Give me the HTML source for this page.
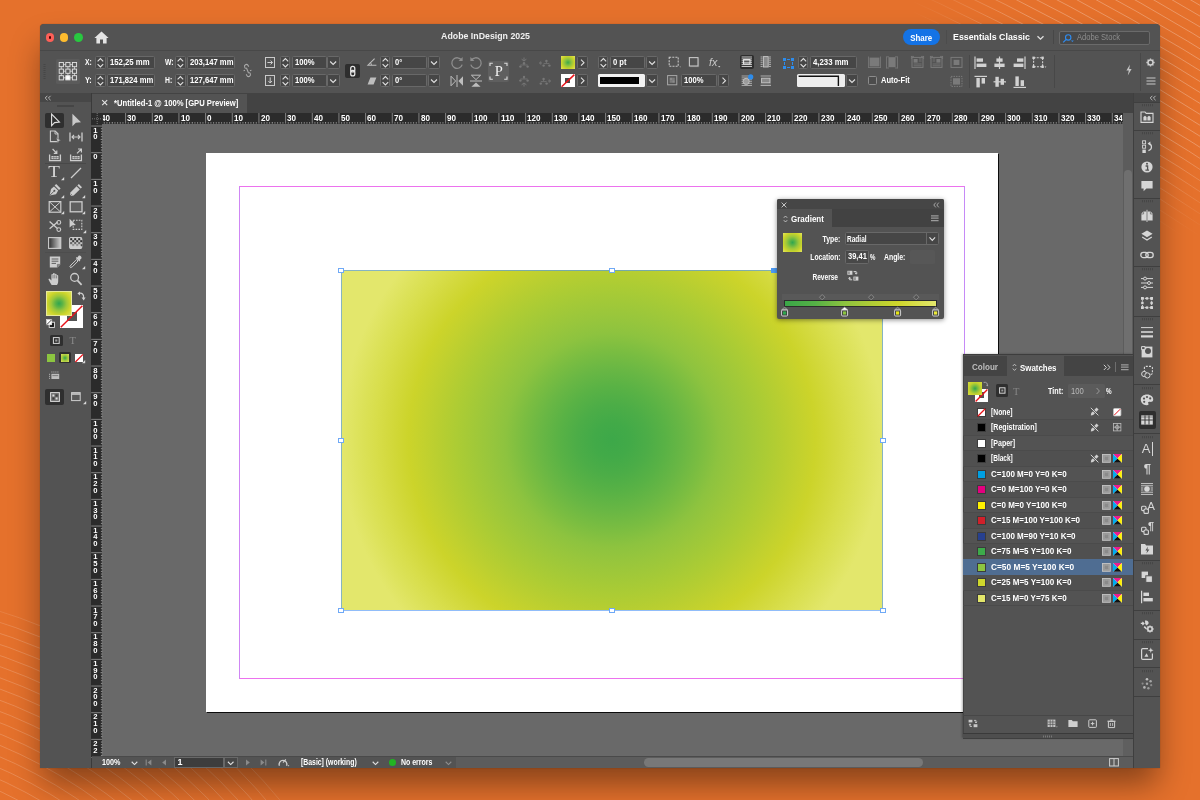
<!DOCTYPE html>
<html><head><meta charset="utf-8"><title>Adobe InDesign 2025</title>
<style>
html,body{margin:0;padding:0}
body{width:1200px;height:800px;overflow:hidden;position:relative;background:#e5712c;font-family:"Liberation Sans",sans-serif}
.a{position:absolute;display:block}
#root{position:absolute;left:0;top:0;width:1200px;height:800px;will-change:transform;-webkit-font-smoothing:antialiased}
svg{overflow:visible}
.t{font-family:"Liberation Sans",sans-serif;font-weight:bold;white-space:nowrap}
.r{font-family:"Liberation Serif",serif}
</style></head><body>
<div id="root">
<svg class="a" style="left:0px;top:0px;" width="1200" height="800" viewBox="0 0 1200 800"><defs><radialGradient id="fade" gradientUnits="userSpaceOnUse" cx="1200" cy="0" r="290" gradientTransform="scale(1 .82)"><stop offset="0" stop-color="#fff"/><stop offset=".6" stop-color="#fff"/><stop offset="1" stop-color="#000"/></radialGradient><radialGradient id="fade2" gradientUnits="userSpaceOnUse" cx="0" cy="800" r="320" gradientTransform="translate(0 800) scale(1 .66) translate(0 -800)"><stop offset="0" stop-color="#fff"/><stop offset=".8" stop-color="#fff"/><stop offset="1" stop-color="#000"/></radialGradient><mask id="mtr" maskUnits="userSpaceOnUse" x="900" y="0" width="300" height="300"><rect x="900" y="0" width="300" height="300" fill="url(#fade)"/></mask><mask id="mbl" maskUnits="userSpaceOnUse" x="0" y="560" width="340" height="240"><rect x="0" y="560" width="340" height="240" fill="url(#fade2)"/></mask></defs><g mask="url(#mtr)"><g fill="none" stroke="#fff" stroke-opacity=".36" stroke-width="0.75"><circle cx="-66" cy="2133" r="2262"/><circle cx="-66" cy="2133" r="2271.3"/><circle cx="-66" cy="2133" r="2280.6"/><circle cx="-66" cy="2133" r="2289.9"/><circle cx="-66" cy="2133" r="2299.2"/><circle cx="-66" cy="2133" r="2308.5"/><circle cx="-66" cy="2133" r="2317.8"/><circle cx="-66" cy="2133" r="2327.1"/><circle cx="-66" cy="2133" r="2336.4"/><circle cx="-66" cy="2133" r="2345.7"/><circle cx="-66" cy="2133" r="2355"/><circle cx="-66" cy="2133" r="2364.3"/><circle cx="-66" cy="2133" r="2373.6"/><circle cx="-66" cy="2133" r="2382.9"/><circle cx="-66" cy="2133" r="2392.2"/><circle cx="-66" cy="2133" r="2401.5"/><circle cx="-66" cy="2133" r="2410.8"/><circle cx="-66" cy="2133" r="2420.1"/><circle cx="-66" cy="2133" r="2429.4"/><circle cx="-66" cy="2133" r="2438.7"/><circle cx="-66" cy="2133" r="2448"/><circle cx="-66" cy="2133" r="2457.3"/><circle cx="-66" cy="2133" r="2466.6"/><circle cx="-66" cy="2133" r="2475.9"/><circle cx="-66" cy="2133" r="2485.2"/></g></g><g mask="url(#mbl)"><g fill="none" stroke="#fff" stroke-opacity=".24" stroke-width="0.75"><circle cx="-184" cy="1186" r="603.5"/><circle cx="-184" cy="1186" r="593"/><circle cx="-184" cy="1186" r="582.5"/><circle cx="-184" cy="1186" r="572"/><circle cx="-184" cy="1186" r="561.5"/><circle cx="-184" cy="1186" r="551"/><circle cx="-184" cy="1186" r="540.5"/><circle cx="-184" cy="1186" r="530"/><circle cx="-184" cy="1186" r="519.5"/><circle cx="-184" cy="1186" r="509"/><circle cx="-184" cy="1186" r="498.5"/><circle cx="-184" cy="1186" r="488"/><circle cx="-184" cy="1186" r="477.5"/><circle cx="-184" cy="1186" r="467"/><circle cx="-184" cy="1186" r="456.5"/><circle cx="-184" cy="1186" r="446"/><circle cx="-184" cy="1186" r="435.5"/><circle cx="-184" cy="1186" r="425"/><circle cx="-184" cy="1186" r="414.5"/><circle cx="-184" cy="1186" r="404"/><circle cx="-184" cy="1186" r="393.5"/><circle cx="-184" cy="1186" r="383"/><circle cx="-184" cy="1186" r="372.5"/><circle cx="-184" cy="1186" r="362"/></g></g></svg>
<div class="a" style="left:39.6px;top:24.3px;width:1120.8px;height:744.2px;background:#535353;border-radius:4px 4px 0 0;box-shadow:0 19px 32px -3px rgba(0,0,0,.42),0 0 1px rgba(0,0,0,.5);"></div>
<div class="a" style="left:39.6px;top:49.5px;width:1120.8px;height:1px;background:#484848;"></div>
<div class="a" style="left:45.7px;top:33px;width:8.6px;height:8.6px;background:#fe5f57;border-radius:5px;"></div>
<div class="a" style="left:59.9px;top:33px;width:8.6px;height:8.6px;background:#febc2e;border-radius:5px;"></div>
<div class="a" style="left:74.1px;top:33px;width:8.6px;height:8.6px;background:#28c840;border-radius:5px;"></div>
<div class="a" style="left:48.6px;top:35.9px;width:2.8px;height:2.8px;background:#4d0000;border-radius:1.4px;"></div>
<svg class="a" style="left:94px;top:31px;" width="15" height="13" viewBox="0 0 15 13"><path d="M7.5 0.6 L0.4 7 L2.4 7 L2.4 12.4 L6 12.4 L6 8.4 L9 8.4 L9 12.4 L12.6 12.4 L12.6 7 L14.6 7 Z" fill="#e4e4e4"/></svg>
<span class="a t" style="left:437.45px;top:30.20px;font-size:9.6px;line-height:12px;color:#f0f0f0;transform:scaleX(0.917);transform-origin:50% 50%;">Adobe InDesign 2025</span>
<div class="a" style="left:903px;top:28.8px;width:37px;height:16.6px;background:#1473e6;border-radius:8.3px;"></div>
<span class="a t" style="left:908.30px;top:31.80px;font-size:9.5px;line-height:11px;color:#fff;transform:scaleX(0.833);transform-origin:50% 50%;">Share</span>
<div class="a" style="left:945.5px;top:30px;width:1px;height:14px;background:#4c4c4c;"></div>
<span class="a t" style="left:953.00px;top:31.00px;font-size:9.6px;line-height:12px;color:#fff;transform:scaleX(0.919);transform-origin:0 50%;">Essentials Classic</span>
<svg class="a" style="left:1036px;top:35px;" width="9" height="6" viewBox="0 0 9 6"><path d="M1.5 1.2 L4.5 4.2 L7.5 1.2" fill="none" stroke="#e0e0e0" stroke-width="1.3"/></svg>
<div class="a" style="left:1052.5px;top:30px;width:1px;height:14px;background:#474747;"></div>
<div class="a" style="left:1058.5px;top:30.5px;width:91px;height:14.5px;background:#484848;border:1px solid #6a6a6a;box-sizing:border-box;border-radius:2px;"></div>
<svg class="a" style="left:1062px;top:32.5px;" width="13" height="11" viewBox="0 0 13 11"><circle cx="6.2" cy="4.4" r="2.7" fill="none" stroke="#2f8cf0" stroke-width="1.1"/><path d="M4.2 6.4 L1.2 9.4" stroke="#2f8cf0" stroke-width="1.2"/><path d="M9 7.4 L11.8 7.4 L10.4 9 Z" fill="#2f8cf0"/></svg>
<span class="a t" style="left:1076.50px;top:32.10px;font-size:8.8px;line-height:11px;color:#8e8e8e;font-weight:normal;transform:scaleX(0.862);transform-origin:0 50%;">Adobe Stock</span>
<div class="a" style="left:39.6px;top:92.5px;width:1120.8px;height:1px;background:#3a3a3a;"></div>
<div class="a" style="left:91px;top:93px;width:1042px;height:20px;background:#434343;"></div>
<div class="a" style="left:91.4px;top:93.5px;width:156px;height:19px;background:#535353;"></div>
<svg class="a" style="left:100.5px;top:98.5px;" width="8" height="8" viewBox="0 0 8 8"><path d="M1.2 1.2 L6.2 6.2 M6.2 1.2 L1.2 6.2" stroke="#e6e6e6" stroke-width="1.1" fill="none"/></svg>
<span class="a t" style="left:113.70px;top:97.50px;font-size:9.2px;line-height:11px;color:#fff;transform:scaleX(0.832);transform-origin:0 50%;">*Untitled-1 @ 100% [GPU Preview]</span>
<div class="a" style="left:39.6px;top:93px;width:51px;height:9px;background:#474747;"></div>
<div class="a" style="left:90.6px;top:93px;width:1px;height:675.4px;background:#3a3a3a;"></div>
<svg class="a" style="left:44px;top:94.5px;" width="8" height="6" viewBox="0 0 8 6"><path d="M3.4 0.8 L1.2 3 L3.4 5.2 M6.6 0.8 L4.4 3 L6.6 5.2" stroke="#b8b8b8" stroke-width="1" fill="none"/></svg>
<div class="a" style="left:57px;top:104.5px;width:17px;height:1px;background:#454545;"></div>
<div class="a" style="left:57px;top:106px;width:17px;height:1px;background:#454545;"></div>
<div class="a" style="left:1133px;top:93px;width:27.4px;height:9px;background:#474747;"></div>
<div class="a" style="left:1133px;top:93px;width:1px;height:675.4px;background:#3f3f3f;"></div>
<svg class="a" style="left:1149px;top:94.5px;" width="8" height="6" viewBox="0 0 8 6"><path d="M3.4 0.8 L1.2 3 L3.4 5.2 M6.6 0.8 L4.4 3 L6.6 5.2" stroke="#b8b8b8" stroke-width="1" fill="none"/></svg>
<div class="a" style="left:91px;top:112.5px;width:1042px;height:645px;background:#696969;"></div>
<div class="a" style="left:207px;top:154px;width:792px;height:559.3px;background:#0c0c0c;"></div>
<div class="a" style="left:206px;top:153px;width:792px;height:559.3px;background:#fff;"></div>
<div class="a" style="left:239px;top:186px;width:725.5px;height:492.5px;border:1px solid #ec72ee;box-sizing:border-box;border-left-color:#cf86f4;border-right-color:#c68af7;"></div>
<div class="a" style="left:341.2px;top:270.4px;width:541.6px;height:339.9px;background:radial-gradient(circle 271px at 50% 50%,#3da849 0.0%,#42aa48 6.6%,#4cad47 13.1%,#59b245 19.7%,#69b744 26.3%,#7abd41 32.8%,#8dc33f 39.4%,#98c63c 45.3%,#a2c938 51.3%,#accc34 57.2%,#b7ce31 63.1%,#c2d12e 69.1%,#ccd42a 75.0%,#d0d735 79.2%,#d4da40 83.3%,#d8de4b 87.5%,#dbe156 91.7%,#dfe461 95.8%,#e3e76c 100%);"></div>
<div class="a" style="left:340.7px;top:269.9px;width:542.6px;height:340.9px;border:1px solid rgba(77,148,245,.62);box-sizing:border-box;"></div>
<div class="a" style="left:338.4px;top:267.6px;width:5.6px;height:5.6px;background:#fff;border:1px solid #6fa9f6;box-sizing:border-box;"></div>
<div class="a" style="left:338.4px;top:437.55px;width:5.6px;height:5.6px;background:#fff;border:1px solid #6fa9f6;box-sizing:border-box;"></div>
<div class="a" style="left:338.4px;top:607.5px;width:5.6px;height:5.6px;background:#fff;border:1px solid #6fa9f6;box-sizing:border-box;"></div>
<div class="a" style="left:609.2px;top:267.6px;width:5.6px;height:5.6px;background:#fff;border:1px solid #6fa9f6;box-sizing:border-box;"></div>
<div class="a" style="left:609.2px;top:607.5px;width:5.6px;height:5.6px;background:#fff;border:1px solid #6fa9f6;box-sizing:border-box;"></div>
<div class="a" style="left:880px;top:267.6px;width:5.6px;height:5.6px;background:#fff;border:1px solid #6fa9f6;box-sizing:border-box;"></div>
<div class="a" style="left:880px;top:437.55px;width:5.6px;height:5.6px;background:#fff;border:1px solid #6fa9f6;box-sizing:border-box;"></div>
<div class="a" style="left:880px;top:607.5px;width:5.6px;height:5.6px;background:#fff;border:1px solid #6fa9f6;box-sizing:border-box;"></div>
<div class="a" style="left:771.4px;top:267.6px;width:5.6px;height:5.4px;background:#4d9cf5;"></div>
<div class="a" style="left:90.8px;top:112.8px;width:1042.2px;height:10.9px;background:#2b2b2b;"></div>
<div class="a" style="left:90.8px;top:123.7px;width:11.6px;height:633.3px;background:#2b2b2b;"></div>
<svg class="a" style="left:0px;top:0px;" width="1200" height="800" viewBox="0 0 1200 800"><rect x="103.77" y="122.2" width="1" height="1.4" fill="#989898"/><rect x="106.43" y="122.2" width="1" height="1.4" fill="#989898"/><rect x="109.10" y="122.2" width="1" height="1.4" fill="#989898"/><rect x="111.77" y="122" width="1" height="1.6" fill="#a0a0a0"/><rect x="114.43" y="122.2" width="1" height="1.4" fill="#989898"/><rect x="117.10" y="122.2" width="1" height="1.4" fill="#989898"/><rect x="119.77" y="122.2" width="1" height="1.4" fill="#989898"/><rect x="122.43" y="122.2" width="1" height="1.4" fill="#989898"/><rect x="125.10" y="113" width="1" height="10.6" fill="#828282"/><rect x="127.77" y="122.2" width="1" height="1.4" fill="#989898"/><rect x="130.43" y="122.2" width="1" height="1.4" fill="#989898"/><rect x="133.10" y="122.2" width="1" height="1.4" fill="#989898"/><rect x="135.77" y="122.2" width="1" height="1.4" fill="#989898"/><rect x="138.43" y="122" width="1" height="1.6" fill="#a0a0a0"/><rect x="141.10" y="122.2" width="1" height="1.4" fill="#989898"/><rect x="143.77" y="122.2" width="1" height="1.4" fill="#989898"/><rect x="146.43" y="122.2" width="1" height="1.4" fill="#989898"/><rect x="149.10" y="122.2" width="1" height="1.4" fill="#989898"/><rect x="151.77" y="113" width="1" height="10.6" fill="#828282"/><rect x="154.43" y="122.2" width="1" height="1.4" fill="#989898"/><rect x="157.10" y="122.2" width="1" height="1.4" fill="#989898"/><rect x="159.77" y="122.2" width="1" height="1.4" fill="#989898"/><rect x="162.43" y="122.2" width="1" height="1.4" fill="#989898"/><rect x="165.10" y="122" width="1" height="1.6" fill="#a0a0a0"/><rect x="167.77" y="122.2" width="1" height="1.4" fill="#989898"/><rect x="170.43" y="122.2" width="1" height="1.4" fill="#989898"/><rect x="173.10" y="122.2" width="1" height="1.4" fill="#989898"/><rect x="175.77" y="122.2" width="1" height="1.4" fill="#989898"/><rect x="178.43" y="113" width="1" height="10.6" fill="#828282"/><rect x="181.10" y="122.2" width="1" height="1.4" fill="#989898"/><rect x="183.77" y="122.2" width="1" height="1.4" fill="#989898"/><rect x="186.43" y="122.2" width="1" height="1.4" fill="#989898"/><rect x="189.10" y="122.2" width="1" height="1.4" fill="#989898"/><rect x="191.77" y="122" width="1" height="1.6" fill="#a0a0a0"/><rect x="194.43" y="122.2" width="1" height="1.4" fill="#989898"/><rect x="197.10" y="122.2" width="1" height="1.4" fill="#989898"/><rect x="199.77" y="122.2" width="1" height="1.4" fill="#989898"/><rect x="202.43" y="122.2" width="1" height="1.4" fill="#989898"/><rect x="205.10" y="113" width="1" height="10.6" fill="#828282"/><rect x="207.77" y="122.2" width="1" height="1.4" fill="#989898"/><rect x="210.43" y="122.2" width="1" height="1.4" fill="#989898"/><rect x="213.10" y="122.2" width="1" height="1.4" fill="#989898"/><rect x="215.77" y="122.2" width="1" height="1.4" fill="#989898"/><rect x="218.43" y="122" width="1" height="1.6" fill="#a0a0a0"/><rect x="221.10" y="122.2" width="1" height="1.4" fill="#989898"/><rect x="223.77" y="122.2" width="1" height="1.4" fill="#989898"/><rect x="226.43" y="122.2" width="1" height="1.4" fill="#989898"/><rect x="229.10" y="122.2" width="1" height="1.4" fill="#989898"/><rect x="231.77" y="113" width="1" height="10.6" fill="#828282"/><rect x="234.43" y="122.2" width="1" height="1.4" fill="#989898"/><rect x="237.10" y="122.2" width="1" height="1.4" fill="#989898"/><rect x="239.77" y="122.2" width="1" height="1.4" fill="#989898"/><rect x="242.43" y="122.2" width="1" height="1.4" fill="#989898"/><rect x="245.10" y="122" width="1" height="1.6" fill="#a0a0a0"/><rect x="247.77" y="122.2" width="1" height="1.4" fill="#989898"/><rect x="250.43" y="122.2" width="1" height="1.4" fill="#989898"/><rect x="253.10" y="122.2" width="1" height="1.4" fill="#989898"/><rect x="255.77" y="122.2" width="1" height="1.4" fill="#989898"/><rect x="258.43" y="113" width="1" height="10.6" fill="#828282"/><rect x="261.10" y="122.2" width="1" height="1.4" fill="#989898"/><rect x="263.77" y="122.2" width="1" height="1.4" fill="#989898"/><rect x="266.43" y="122.2" width="1" height="1.4" fill="#989898"/><rect x="269.10" y="122.2" width="1" height="1.4" fill="#989898"/><rect x="271.77" y="122" width="1" height="1.6" fill="#a0a0a0"/><rect x="274.43" y="122.2" width="1" height="1.4" fill="#989898"/><rect x="277.10" y="122.2" width="1" height="1.4" fill="#989898"/><rect x="279.77" y="122.2" width="1" height="1.4" fill="#989898"/><rect x="282.43" y="122.2" width="1" height="1.4" fill="#989898"/><rect x="285.10" y="113" width="1" height="10.6" fill="#828282"/><rect x="287.77" y="122.2" width="1" height="1.4" fill="#989898"/><rect x="290.43" y="122.2" width="1" height="1.4" fill="#989898"/><rect x="293.10" y="122.2" width="1" height="1.4" fill="#989898"/><rect x="295.77" y="122.2" width="1" height="1.4" fill="#989898"/><rect x="298.43" y="122" width="1" height="1.6" fill="#a0a0a0"/><rect x="301.10" y="122.2" width="1" height="1.4" fill="#989898"/><rect x="303.77" y="122.2" width="1" height="1.4" fill="#989898"/><rect x="306.43" y="122.2" width="1" height="1.4" fill="#989898"/><rect x="309.10" y="122.2" width="1" height="1.4" fill="#989898"/><rect x="311.77" y="113" width="1" height="10.6" fill="#828282"/><rect x="314.43" y="122.2" width="1" height="1.4" fill="#989898"/><rect x="317.10" y="122.2" width="1" height="1.4" fill="#989898"/><rect x="319.77" y="122.2" width="1" height="1.4" fill="#989898"/><rect x="322.43" y="122.2" width="1" height="1.4" fill="#989898"/><rect x="325.10" y="122" width="1" height="1.6" fill="#a0a0a0"/><rect x="327.77" y="122.2" width="1" height="1.4" fill="#989898"/><rect x="330.43" y="122.2" width="1" height="1.4" fill="#989898"/><rect x="333.10" y="122.2" width="1" height="1.4" fill="#989898"/><rect x="335.77" y="122.2" width="1" height="1.4" fill="#989898"/><rect x="338.43" y="113" width="1" height="10.6" fill="#828282"/><rect x="341.10" y="122.2" width="1" height="1.4" fill="#989898"/><rect x="343.77" y="122.2" width="1" height="1.4" fill="#989898"/><rect x="346.43" y="122.2" width="1" height="1.4" fill="#989898"/><rect x="349.10" y="122.2" width="1" height="1.4" fill="#989898"/><rect x="351.77" y="122" width="1" height="1.6" fill="#a0a0a0"/><rect x="354.43" y="122.2" width="1" height="1.4" fill="#989898"/><rect x="357.10" y="122.2" width="1" height="1.4" fill="#989898"/><rect x="359.77" y="122.2" width="1" height="1.4" fill="#989898"/><rect x="362.43" y="122.2" width="1" height="1.4" fill="#989898"/><rect x="365.10" y="113" width="1" height="10.6" fill="#828282"/><rect x="367.77" y="122.2" width="1" height="1.4" fill="#989898"/><rect x="370.43" y="122.2" width="1" height="1.4" fill="#989898"/><rect x="373.10" y="122.2" width="1" height="1.4" fill="#989898"/><rect x="375.77" y="122.2" width="1" height="1.4" fill="#989898"/><rect x="378.43" y="122" width="1" height="1.6" fill="#a0a0a0"/><rect x="381.10" y="122.2" width="1" height="1.4" fill="#989898"/><rect x="383.77" y="122.2" width="1" height="1.4" fill="#989898"/><rect x="386.43" y="122.2" width="1" height="1.4" fill="#989898"/><rect x="389.10" y="122.2" width="1" height="1.4" fill="#989898"/><rect x="391.77" y="113" width="1" height="10.6" fill="#828282"/><rect x="394.43" y="122.2" width="1" height="1.4" fill="#989898"/><rect x="397.10" y="122.2" width="1" height="1.4" fill="#989898"/><rect x="399.77" y="122.2" width="1" height="1.4" fill="#989898"/><rect x="402.43" y="122.2" width="1" height="1.4" fill="#989898"/><rect x="405.10" y="122" width="1" height="1.6" fill="#a0a0a0"/><rect x="407.77" y="122.2" width="1" height="1.4" fill="#989898"/><rect x="410.43" y="122.2" width="1" height="1.4" fill="#989898"/><rect x="413.10" y="122.2" width="1" height="1.4" fill="#989898"/><rect x="415.77" y="122.2" width="1" height="1.4" fill="#989898"/><rect x="418.43" y="113" width="1" height="10.6" fill="#828282"/><rect x="421.10" y="122.2" width="1" height="1.4" fill="#989898"/><rect x="423.77" y="122.2" width="1" height="1.4" fill="#989898"/><rect x="426.43" y="122.2" width="1" height="1.4" fill="#989898"/><rect x="429.10" y="122.2" width="1" height="1.4" fill="#989898"/><rect x="431.77" y="122" width="1" height="1.6" fill="#a0a0a0"/><rect x="434.43" y="122.2" width="1" height="1.4" fill="#989898"/><rect x="437.10" y="122.2" width="1" height="1.4" fill="#989898"/><rect x="439.77" y="122.2" width="1" height="1.4" fill="#989898"/><rect x="442.43" y="122.2" width="1" height="1.4" fill="#989898"/><rect x="445.10" y="113" width="1" height="10.6" fill="#828282"/><rect x="447.77" y="122.2" width="1" height="1.4" fill="#989898"/><rect x="450.43" y="122.2" width="1" height="1.4" fill="#989898"/><rect x="453.10" y="122.2" width="1" height="1.4" fill="#989898"/><rect x="455.77" y="122.2" width="1" height="1.4" fill="#989898"/><rect x="458.43" y="122" width="1" height="1.6" fill="#a0a0a0"/><rect x="461.10" y="122.2" width="1" height="1.4" fill="#989898"/><rect x="463.77" y="122.2" width="1" height="1.4" fill="#989898"/><rect x="466.43" y="122.2" width="1" height="1.4" fill="#989898"/><rect x="469.10" y="122.2" width="1" height="1.4" fill="#989898"/><rect x="471.77" y="113" width="1" height="10.6" fill="#828282"/><rect x="474.43" y="122.2" width="1" height="1.4" fill="#989898"/><rect x="477.10" y="122.2" width="1" height="1.4" fill="#989898"/><rect x="479.77" y="122.2" width="1" height="1.4" fill="#989898"/><rect x="482.43" y="122.2" width="1" height="1.4" fill="#989898"/><rect x="485.10" y="122" width="1" height="1.6" fill="#a0a0a0"/><rect x="487.77" y="122.2" width="1" height="1.4" fill="#989898"/><rect x="490.43" y="122.2" width="1" height="1.4" fill="#989898"/><rect x="493.10" y="122.2" width="1" height="1.4" fill="#989898"/><rect x="495.77" y="122.2" width="1" height="1.4" fill="#989898"/><rect x="498.43" y="113" width="1" height="10.6" fill="#828282"/><rect x="501.10" y="122.2" width="1" height="1.4" fill="#989898"/><rect x="503.77" y="122.2" width="1" height="1.4" fill="#989898"/><rect x="506.43" y="122.2" width="1" height="1.4" fill="#989898"/><rect x="509.10" y="122.2" width="1" height="1.4" fill="#989898"/><rect x="511.77" y="122" width="1" height="1.6" fill="#a0a0a0"/><rect x="514.43" y="122.2" width="1" height="1.4" fill="#989898"/><rect x="517.10" y="122.2" width="1" height="1.4" fill="#989898"/><rect x="519.77" y="122.2" width="1" height="1.4" fill="#989898"/><rect x="522.43" y="122.2" width="1" height="1.4" fill="#989898"/><rect x="525.10" y="113" width="1" height="10.6" fill="#828282"/><rect x="527.77" y="122.2" width="1" height="1.4" fill="#989898"/><rect x="530.43" y="122.2" width="1" height="1.4" fill="#989898"/><rect x="533.10" y="122.2" width="1" height="1.4" fill="#989898"/><rect x="535.77" y="122.2" width="1" height="1.4" fill="#989898"/><rect x="538.43" y="122" width="1" height="1.6" fill="#a0a0a0"/><rect x="541.10" y="122.2" width="1" height="1.4" fill="#989898"/><rect x="543.77" y="122.2" width="1" height="1.4" fill="#989898"/><rect x="546.43" y="122.2" width="1" height="1.4" fill="#989898"/><rect x="549.10" y="122.2" width="1" height="1.4" fill="#989898"/><rect x="551.77" y="113" width="1" height="10.6" fill="#828282"/><rect x="554.43" y="122.2" width="1" height="1.4" fill="#989898"/><rect x="557.10" y="122.2" width="1" height="1.4" fill="#989898"/><rect x="559.77" y="122.2" width="1" height="1.4" fill="#989898"/><rect x="562.43" y="122.2" width="1" height="1.4" fill="#989898"/><rect x="565.10" y="122" width="1" height="1.6" fill="#a0a0a0"/><rect x="567.77" y="122.2" width="1" height="1.4" fill="#989898"/><rect x="570.43" y="122.2" width="1" height="1.4" fill="#989898"/><rect x="573.10" y="122.2" width="1" height="1.4" fill="#989898"/><rect x="575.77" y="122.2" width="1" height="1.4" fill="#989898"/><rect x="578.43" y="113" width="1" height="10.6" fill="#828282"/><rect x="581.10" y="122.2" width="1" height="1.4" fill="#989898"/><rect x="583.77" y="122.2" width="1" height="1.4" fill="#989898"/><rect x="586.43" y="122.2" width="1" height="1.4" fill="#989898"/><rect x="589.10" y="122.2" width="1" height="1.4" fill="#989898"/><rect x="591.77" y="122" width="1" height="1.6" fill="#a0a0a0"/><rect x="594.43" y="122.2" width="1" height="1.4" fill="#989898"/><rect x="597.10" y="122.2" width="1" height="1.4" fill="#989898"/><rect x="599.77" y="122.2" width="1" height="1.4" fill="#989898"/><rect x="602.43" y="122.2" width="1" height="1.4" fill="#989898"/><rect x="605.10" y="113" width="1" height="10.6" fill="#828282"/><rect x="607.77" y="122.2" width="1" height="1.4" fill="#989898"/><rect x="610.43" y="122.2" width="1" height="1.4" fill="#989898"/><rect x="613.10" y="122.2" width="1" height="1.4" fill="#989898"/><rect x="615.77" y="122.2" width="1" height="1.4" fill="#989898"/><rect x="618.43" y="122" width="1" height="1.6" fill="#a0a0a0"/><rect x="621.10" y="122.2" width="1" height="1.4" fill="#989898"/><rect x="623.77" y="122.2" width="1" height="1.4" fill="#989898"/><rect x="626.43" y="122.2" width="1" height="1.4" fill="#989898"/><rect x="629.10" y="122.2" width="1" height="1.4" fill="#989898"/><rect x="631.77" y="113" width="1" height="10.6" fill="#828282"/><rect x="634.43" y="122.2" width="1" height="1.4" fill="#989898"/><rect x="637.10" y="122.2" width="1" height="1.4" fill="#989898"/><rect x="639.77" y="122.2" width="1" height="1.4" fill="#989898"/><rect x="642.43" y="122.2" width="1" height="1.4" fill="#989898"/><rect x="645.10" y="122" width="1" height="1.6" fill="#a0a0a0"/><rect x="647.77" y="122.2" width="1" height="1.4" fill="#989898"/><rect x="650.43" y="122.2" width="1" height="1.4" fill="#989898"/><rect x="653.10" y="122.2" width="1" height="1.4" fill="#989898"/><rect x="655.77" y="122.2" width="1" height="1.4" fill="#989898"/><rect x="658.43" y="113" width="1" height="10.6" fill="#828282"/><rect x="661.10" y="122.2" width="1" height="1.4" fill="#989898"/><rect x="663.77" y="122.2" width="1" height="1.4" fill="#989898"/><rect x="666.43" y="122.2" width="1" height="1.4" fill="#989898"/><rect x="669.10" y="122.2" width="1" height="1.4" fill="#989898"/><rect x="671.77" y="122" width="1" height="1.6" fill="#a0a0a0"/><rect x="674.43" y="122.2" width="1" height="1.4" fill="#989898"/><rect x="677.10" y="122.2" width="1" height="1.4" fill="#989898"/><rect x="679.77" y="122.2" width="1" height="1.4" fill="#989898"/><rect x="682.43" y="122.2" width="1" height="1.4" fill="#989898"/><rect x="685.10" y="113" width="1" height="10.6" fill="#828282"/><rect x="687.77" y="122.2" width="1" height="1.4" fill="#989898"/><rect x="690.43" y="122.2" width="1" height="1.4" fill="#989898"/><rect x="693.10" y="122.2" width="1" height="1.4" fill="#989898"/><rect x="695.77" y="122.2" width="1" height="1.4" fill="#989898"/><rect x="698.43" y="122" width="1" height="1.6" fill="#a0a0a0"/><rect x="701.10" y="122.2" width="1" height="1.4" fill="#989898"/><rect x="703.77" y="122.2" width="1" height="1.4" fill="#989898"/><rect x="706.43" y="122.2" width="1" height="1.4" fill="#989898"/><rect x="709.10" y="122.2" width="1" height="1.4" fill="#989898"/><rect x="711.77" y="113" width="1" height="10.6" fill="#828282"/><rect x="714.43" y="122.2" width="1" height="1.4" fill="#989898"/><rect x="717.10" y="122.2" width="1" height="1.4" fill="#989898"/><rect x="719.77" y="122.2" width="1" height="1.4" fill="#989898"/><rect x="722.43" y="122.2" width="1" height="1.4" fill="#989898"/><rect x="725.10" y="122" width="1" height="1.6" fill="#a0a0a0"/><rect x="727.77" y="122.2" width="1" height="1.4" fill="#989898"/><rect x="730.43" y="122.2" width="1" height="1.4" fill="#989898"/><rect x="733.10" y="122.2" width="1" height="1.4" fill="#989898"/><rect x="735.77" y="122.2" width="1" height="1.4" fill="#989898"/><rect x="738.43" y="113" width="1" height="10.6" fill="#828282"/><rect x="741.10" y="122.2" width="1" height="1.4" fill="#989898"/><rect x="743.77" y="122.2" width="1" height="1.4" fill="#989898"/><rect x="746.43" y="122.2" width="1" height="1.4" fill="#989898"/><rect x="749.10" y="122.2" width="1" height="1.4" fill="#989898"/><rect x="751.77" y="122" width="1" height="1.6" fill="#a0a0a0"/><rect x="754.43" y="122.2" width="1" height="1.4" fill="#989898"/><rect x="757.10" y="122.2" width="1" height="1.4" fill="#989898"/><rect x="759.77" y="122.2" width="1" height="1.4" fill="#989898"/><rect x="762.43" y="122.2" width="1" height="1.4" fill="#989898"/><rect x="765.10" y="113" width="1" height="10.6" fill="#828282"/><rect x="767.77" y="122.2" width="1" height="1.4" fill="#989898"/><rect x="770.43" y="122.2" width="1" height="1.4" fill="#989898"/><rect x="773.10" y="122.2" width="1" height="1.4" fill="#989898"/><rect x="775.77" y="122.2" width="1" height="1.4" fill="#989898"/><rect x="778.43" y="122" width="1" height="1.6" fill="#a0a0a0"/><rect x="781.10" y="122.2" width="1" height="1.4" fill="#989898"/><rect x="783.77" y="122.2" width="1" height="1.4" fill="#989898"/><rect x="786.43" y="122.2" width="1" height="1.4" fill="#989898"/><rect x="789.10" y="122.2" width="1" height="1.4" fill="#989898"/><rect x="791.77" y="113" width="1" height="10.6" fill="#828282"/><rect x="794.43" y="122.2" width="1" height="1.4" fill="#989898"/><rect x="797.10" y="122.2" width="1" height="1.4" fill="#989898"/><rect x="799.77" y="122.2" width="1" height="1.4" fill="#989898"/><rect x="802.43" y="122.2" width="1" height="1.4" fill="#989898"/><rect x="805.10" y="122" width="1" height="1.6" fill="#a0a0a0"/><rect x="807.77" y="122.2" width="1" height="1.4" fill="#989898"/><rect x="810.43" y="122.2" width="1" height="1.4" fill="#989898"/><rect x="813.10" y="122.2" width="1" height="1.4" fill="#989898"/><rect x="815.77" y="122.2" width="1" height="1.4" fill="#989898"/><rect x="818.43" y="113" width="1" height="10.6" fill="#828282"/><rect x="821.10" y="122.2" width="1" height="1.4" fill="#989898"/><rect x="823.77" y="122.2" width="1" height="1.4" fill="#989898"/><rect x="826.43" y="122.2" width="1" height="1.4" fill="#989898"/><rect x="829.10" y="122.2" width="1" height="1.4" fill="#989898"/><rect x="831.77" y="122" width="1" height="1.6" fill="#a0a0a0"/><rect x="834.43" y="122.2" width="1" height="1.4" fill="#989898"/><rect x="837.10" y="122.2" width="1" height="1.4" fill="#989898"/><rect x="839.77" y="122.2" width="1" height="1.4" fill="#989898"/><rect x="842.43" y="122.2" width="1" height="1.4" fill="#989898"/><rect x="845.10" y="113" width="1" height="10.6" fill="#828282"/><rect x="847.77" y="122.2" width="1" height="1.4" fill="#989898"/><rect x="850.43" y="122.2" width="1" height="1.4" fill="#989898"/><rect x="853.10" y="122.2" width="1" height="1.4" fill="#989898"/><rect x="855.77" y="122.2" width="1" height="1.4" fill="#989898"/><rect x="858.43" y="122" width="1" height="1.6" fill="#a0a0a0"/><rect x="861.10" y="122.2" width="1" height="1.4" fill="#989898"/><rect x="863.77" y="122.2" width="1" height="1.4" fill="#989898"/><rect x="866.43" y="122.2" width="1" height="1.4" fill="#989898"/><rect x="869.10" y="122.2" width="1" height="1.4" fill="#989898"/><rect x="871.77" y="113" width="1" height="10.6" fill="#828282"/><rect x="874.43" y="122.2" width="1" height="1.4" fill="#989898"/><rect x="877.10" y="122.2" width="1" height="1.4" fill="#989898"/><rect x="879.77" y="122.2" width="1" height="1.4" fill="#989898"/><rect x="882.43" y="122.2" width="1" height="1.4" fill="#989898"/><rect x="885.10" y="122" width="1" height="1.6" fill="#a0a0a0"/><rect x="887.77" y="122.2" width="1" height="1.4" fill="#989898"/><rect x="890.43" y="122.2" width="1" height="1.4" fill="#989898"/><rect x="893.10" y="122.2" width="1" height="1.4" fill="#989898"/><rect x="895.77" y="122.2" width="1" height="1.4" fill="#989898"/><rect x="898.43" y="113" width="1" height="10.6" fill="#828282"/><rect x="901.10" y="122.2" width="1" height="1.4" fill="#989898"/><rect x="903.77" y="122.2" width="1" height="1.4" fill="#989898"/><rect x="906.43" y="122.2" width="1" height="1.4" fill="#989898"/><rect x="909.10" y="122.2" width="1" height="1.4" fill="#989898"/><rect x="911.77" y="122" width="1" height="1.6" fill="#a0a0a0"/><rect x="914.43" y="122.2" width="1" height="1.4" fill="#989898"/><rect x="917.10" y="122.2" width="1" height="1.4" fill="#989898"/><rect x="919.77" y="122.2" width="1" height="1.4" fill="#989898"/><rect x="922.43" y="122.2" width="1" height="1.4" fill="#989898"/><rect x="925.10" y="113" width="1" height="10.6" fill="#828282"/><rect x="927.77" y="122.2" width="1" height="1.4" fill="#989898"/><rect x="930.43" y="122.2" width="1" height="1.4" fill="#989898"/><rect x="933.10" y="122.2" width="1" height="1.4" fill="#989898"/><rect x="935.77" y="122.2" width="1" height="1.4" fill="#989898"/><rect x="938.43" y="122" width="1" height="1.6" fill="#a0a0a0"/><rect x="941.10" y="122.2" width="1" height="1.4" fill="#989898"/><rect x="943.77" y="122.2" width="1" height="1.4" fill="#989898"/><rect x="946.43" y="122.2" width="1" height="1.4" fill="#989898"/><rect x="949.10" y="122.2" width="1" height="1.4" fill="#989898"/><rect x="951.77" y="113" width="1" height="10.6" fill="#828282"/><rect x="954.43" y="122.2" width="1" height="1.4" fill="#989898"/><rect x="957.10" y="122.2" width="1" height="1.4" fill="#989898"/><rect x="959.77" y="122.2" width="1" height="1.4" fill="#989898"/><rect x="962.43" y="122.2" width="1" height="1.4" fill="#989898"/><rect x="965.10" y="122" width="1" height="1.6" fill="#a0a0a0"/><rect x="967.77" y="122.2" width="1" height="1.4" fill="#989898"/><rect x="970.43" y="122.2" width="1" height="1.4" fill="#989898"/><rect x="973.10" y="122.2" width="1" height="1.4" fill="#989898"/><rect x="975.77" y="122.2" width="1" height="1.4" fill="#989898"/><rect x="978.43" y="113" width="1" height="10.6" fill="#828282"/><rect x="981.10" y="122.2" width="1" height="1.4" fill="#989898"/><rect x="983.77" y="122.2" width="1" height="1.4" fill="#989898"/><rect x="986.43" y="122.2" width="1" height="1.4" fill="#989898"/><rect x="989.10" y="122.2" width="1" height="1.4" fill="#989898"/><rect x="991.77" y="122" width="1" height="1.6" fill="#a0a0a0"/><rect x="994.43" y="122.2" width="1" height="1.4" fill="#989898"/><rect x="997.10" y="122.2" width="1" height="1.4" fill="#989898"/><rect x="999.77" y="122.2" width="1" height="1.4" fill="#989898"/><rect x="1002.43" y="122.2" width="1" height="1.4" fill="#989898"/><rect x="1005.10" y="113" width="1" height="10.6" fill="#828282"/><rect x="1007.77" y="122.2" width="1" height="1.4" fill="#989898"/><rect x="1010.43" y="122.2" width="1" height="1.4" fill="#989898"/><rect x="1013.10" y="122.2" width="1" height="1.4" fill="#989898"/><rect x="1015.77" y="122.2" width="1" height="1.4" fill="#989898"/><rect x="1018.43" y="122" width="1" height="1.6" fill="#a0a0a0"/><rect x="1021.10" y="122.2" width="1" height="1.4" fill="#989898"/><rect x="1023.77" y="122.2" width="1" height="1.4" fill="#989898"/><rect x="1026.43" y="122.2" width="1" height="1.4" fill="#989898"/><rect x="1029.10" y="122.2" width="1" height="1.4" fill="#989898"/><rect x="1031.77" y="113" width="1" height="10.6" fill="#828282"/><rect x="1034.43" y="122.2" width="1" height="1.4" fill="#989898"/><rect x="1037.10" y="122.2" width="1" height="1.4" fill="#989898"/><rect x="1039.77" y="122.2" width="1" height="1.4" fill="#989898"/><rect x="1042.43" y="122.2" width="1" height="1.4" fill="#989898"/><rect x="1045.10" y="122" width="1" height="1.6" fill="#a0a0a0"/><rect x="1047.77" y="122.2" width="1" height="1.4" fill="#989898"/><rect x="1050.43" y="122.2" width="1" height="1.4" fill="#989898"/><rect x="1053.10" y="122.2" width="1" height="1.4" fill="#989898"/><rect x="1055.77" y="122.2" width="1" height="1.4" fill="#989898"/><rect x="1058.43" y="113" width="1" height="10.6" fill="#828282"/><rect x="1061.10" y="122.2" width="1" height="1.4" fill="#989898"/><rect x="1063.77" y="122.2" width="1" height="1.4" fill="#989898"/><rect x="1066.43" y="122.2" width="1" height="1.4" fill="#989898"/><rect x="1069.10" y="122.2" width="1" height="1.4" fill="#989898"/><rect x="1071.77" y="122" width="1" height="1.6" fill="#a0a0a0"/><rect x="1074.43" y="122.2" width="1" height="1.4" fill="#989898"/><rect x="1077.10" y="122.2" width="1" height="1.4" fill="#989898"/><rect x="1079.77" y="122.2" width="1" height="1.4" fill="#989898"/><rect x="1082.43" y="122.2" width="1" height="1.4" fill="#989898"/><rect x="1085.10" y="113" width="1" height="10.6" fill="#828282"/><rect x="1087.77" y="122.2" width="1" height="1.4" fill="#989898"/><rect x="1090.43" y="122.2" width="1" height="1.4" fill="#989898"/><rect x="1093.10" y="122.2" width="1" height="1.4" fill="#989898"/><rect x="1095.77" y="122.2" width="1" height="1.4" fill="#989898"/><rect x="1098.43" y="122" width="1" height="1.6" fill="#a0a0a0"/><rect x="1101.10" y="122.2" width="1" height="1.4" fill="#989898"/><rect x="1103.77" y="122.2" width="1" height="1.4" fill="#989898"/><rect x="1106.43" y="122.2" width="1" height="1.4" fill="#989898"/><rect x="1109.10" y="122.2" width="1" height="1.4" fill="#989898"/><rect x="1111.77" y="113" width="1" height="10.6" fill="#828282"/><rect x="1114.43" y="122.2" width="1" height="1.4" fill="#989898"/><rect x="1117.10" y="122.2" width="1" height="1.4" fill="#989898"/><rect x="1119.77" y="122.2" width="1" height="1.4" fill="#989898"/><rect x="1122.43" y="122.2" width="1" height="1.4" fill="#989898"/><rect x="91.2" y="125.53" width="11" height="1" fill="#828282"/><rect x="100.9" y="128.20" width="1.5" height="1" fill="#989898"/><rect x="100.9" y="130.87" width="1.5" height="1" fill="#989898"/><rect x="100.9" y="133.53" width="1.5" height="1" fill="#989898"/><rect x="100.9" y="136.20" width="1.5" height="1" fill="#989898"/><rect x="100.6" y="138.87" width="1.8" height="1" fill="#a0a0a0"/><rect x="100.9" y="141.53" width="1.5" height="1" fill="#989898"/><rect x="100.9" y="144.20" width="1.5" height="1" fill="#989898"/><rect x="100.9" y="146.87" width="1.5" height="1" fill="#989898"/><rect x="100.9" y="149.53" width="1.5" height="1" fill="#989898"/><rect x="91.2" y="152.20" width="11" height="1" fill="#828282"/><rect x="100.9" y="154.87" width="1.5" height="1" fill="#989898"/><rect x="100.9" y="157.53" width="1.5" height="1" fill="#989898"/><rect x="100.9" y="160.20" width="1.5" height="1" fill="#989898"/><rect x="100.9" y="162.87" width="1.5" height="1" fill="#989898"/><rect x="100.6" y="165.53" width="1.8" height="1" fill="#a0a0a0"/><rect x="100.9" y="168.20" width="1.5" height="1" fill="#989898"/><rect x="100.9" y="170.87" width="1.5" height="1" fill="#989898"/><rect x="100.9" y="173.53" width="1.5" height="1" fill="#989898"/><rect x="100.9" y="176.20" width="1.5" height="1" fill="#989898"/><rect x="91.2" y="178.87" width="11" height="1" fill="#828282"/><rect x="100.9" y="181.53" width="1.5" height="1" fill="#989898"/><rect x="100.9" y="184.20" width="1.5" height="1" fill="#989898"/><rect x="100.9" y="186.87" width="1.5" height="1" fill="#989898"/><rect x="100.9" y="189.53" width="1.5" height="1" fill="#989898"/><rect x="100.6" y="192.20" width="1.8" height="1" fill="#a0a0a0"/><rect x="100.9" y="194.87" width="1.5" height="1" fill="#989898"/><rect x="100.9" y="197.53" width="1.5" height="1" fill="#989898"/><rect x="100.9" y="200.20" width="1.5" height="1" fill="#989898"/><rect x="100.9" y="202.87" width="1.5" height="1" fill="#989898"/><rect x="91.2" y="205.53" width="11" height="1" fill="#828282"/><rect x="100.9" y="208.20" width="1.5" height="1" fill="#989898"/><rect x="100.9" y="210.87" width="1.5" height="1" fill="#989898"/><rect x="100.9" y="213.53" width="1.5" height="1" fill="#989898"/><rect x="100.9" y="216.20" width="1.5" height="1" fill="#989898"/><rect x="100.6" y="218.87" width="1.8" height="1" fill="#a0a0a0"/><rect x="100.9" y="221.53" width="1.5" height="1" fill="#989898"/><rect x="100.9" y="224.20" width="1.5" height="1" fill="#989898"/><rect x="100.9" y="226.87" width="1.5" height="1" fill="#989898"/><rect x="100.9" y="229.53" width="1.5" height="1" fill="#989898"/><rect x="91.2" y="232.20" width="11" height="1" fill="#828282"/><rect x="100.9" y="234.87" width="1.5" height="1" fill="#989898"/><rect x="100.9" y="237.53" width="1.5" height="1" fill="#989898"/><rect x="100.9" y="240.20" width="1.5" height="1" fill="#989898"/><rect x="100.9" y="242.87" width="1.5" height="1" fill="#989898"/><rect x="100.6" y="245.53" width="1.8" height="1" fill="#a0a0a0"/><rect x="100.9" y="248.20" width="1.5" height="1" fill="#989898"/><rect x="100.9" y="250.87" width="1.5" height="1" fill="#989898"/><rect x="100.9" y="253.53" width="1.5" height="1" fill="#989898"/><rect x="100.9" y="256.20" width="1.5" height="1" fill="#989898"/><rect x="91.2" y="258.87" width="11" height="1" fill="#828282"/><rect x="100.9" y="261.53" width="1.5" height="1" fill="#989898"/><rect x="100.9" y="264.20" width="1.5" height="1" fill="#989898"/><rect x="100.9" y="266.87" width="1.5" height="1" fill="#989898"/><rect x="100.9" y="269.53" width="1.5" height="1" fill="#989898"/><rect x="100.6" y="272.20" width="1.8" height="1" fill="#a0a0a0"/><rect x="100.9" y="274.87" width="1.5" height="1" fill="#989898"/><rect x="100.9" y="277.53" width="1.5" height="1" fill="#989898"/><rect x="100.9" y="280.20" width="1.5" height="1" fill="#989898"/><rect x="100.9" y="282.87" width="1.5" height="1" fill="#989898"/><rect x="91.2" y="285.53" width="11" height="1" fill="#828282"/><rect x="100.9" y="288.20" width="1.5" height="1" fill="#989898"/><rect x="100.9" y="290.87" width="1.5" height="1" fill="#989898"/><rect x="100.9" y="293.53" width="1.5" height="1" fill="#989898"/><rect x="100.9" y="296.20" width="1.5" height="1" fill="#989898"/><rect x="100.6" y="298.87" width="1.8" height="1" fill="#a0a0a0"/><rect x="100.9" y="301.53" width="1.5" height="1" fill="#989898"/><rect x="100.9" y="304.20" width="1.5" height="1" fill="#989898"/><rect x="100.9" y="306.87" width="1.5" height="1" fill="#989898"/><rect x="100.9" y="309.53" width="1.5" height="1" fill="#989898"/><rect x="91.2" y="312.20" width="11" height="1" fill="#828282"/><rect x="100.9" y="314.87" width="1.5" height="1" fill="#989898"/><rect x="100.9" y="317.53" width="1.5" height="1" fill="#989898"/><rect x="100.9" y="320.20" width="1.5" height="1" fill="#989898"/><rect x="100.9" y="322.87" width="1.5" height="1" fill="#989898"/><rect x="100.6" y="325.53" width="1.8" height="1" fill="#a0a0a0"/><rect x="100.9" y="328.20" width="1.5" height="1" fill="#989898"/><rect x="100.9" y="330.87" width="1.5" height="1" fill="#989898"/><rect x="100.9" y="333.53" width="1.5" height="1" fill="#989898"/><rect x="100.9" y="336.20" width="1.5" height="1" fill="#989898"/><rect x="91.2" y="338.87" width="11" height="1" fill="#828282"/><rect x="100.9" y="341.53" width="1.5" height="1" fill="#989898"/><rect x="100.9" y="344.20" width="1.5" height="1" fill="#989898"/><rect x="100.9" y="346.87" width="1.5" height="1" fill="#989898"/><rect x="100.9" y="349.53" width="1.5" height="1" fill="#989898"/><rect x="100.6" y="352.20" width="1.8" height="1" fill="#a0a0a0"/><rect x="100.9" y="354.87" width="1.5" height="1" fill="#989898"/><rect x="100.9" y="357.53" width="1.5" height="1" fill="#989898"/><rect x="100.9" y="360.20" width="1.5" height="1" fill="#989898"/><rect x="100.9" y="362.87" width="1.5" height="1" fill="#989898"/><rect x="91.2" y="365.53" width="11" height="1" fill="#828282"/><rect x="100.9" y="368.20" width="1.5" height="1" fill="#989898"/><rect x="100.9" y="370.87" width="1.5" height="1" fill="#989898"/><rect x="100.9" y="373.53" width="1.5" height="1" fill="#989898"/><rect x="100.9" y="376.20" width="1.5" height="1" fill="#989898"/><rect x="100.6" y="378.87" width="1.8" height="1" fill="#a0a0a0"/><rect x="100.9" y="381.53" width="1.5" height="1" fill="#989898"/><rect x="100.9" y="384.20" width="1.5" height="1" fill="#989898"/><rect x="100.9" y="386.87" width="1.5" height="1" fill="#989898"/><rect x="100.9" y="389.53" width="1.5" height="1" fill="#989898"/><rect x="91.2" y="392.20" width="11" height="1" fill="#828282"/><rect x="100.9" y="394.87" width="1.5" height="1" fill="#989898"/><rect x="100.9" y="397.53" width="1.5" height="1" fill="#989898"/><rect x="100.9" y="400.20" width="1.5" height="1" fill="#989898"/><rect x="100.9" y="402.87" width="1.5" height="1" fill="#989898"/><rect x="100.6" y="405.53" width="1.8" height="1" fill="#a0a0a0"/><rect x="100.9" y="408.20" width="1.5" height="1" fill="#989898"/><rect x="100.9" y="410.87" width="1.5" height="1" fill="#989898"/><rect x="100.9" y="413.53" width="1.5" height="1" fill="#989898"/><rect x="100.9" y="416.20" width="1.5" height="1" fill="#989898"/><rect x="91.2" y="418.87" width="11" height="1" fill="#828282"/><rect x="100.9" y="421.53" width="1.5" height="1" fill="#989898"/><rect x="100.9" y="424.20" width="1.5" height="1" fill="#989898"/><rect x="100.9" y="426.87" width="1.5" height="1" fill="#989898"/><rect x="100.9" y="429.53" width="1.5" height="1" fill="#989898"/><rect x="100.6" y="432.20" width="1.8" height="1" fill="#a0a0a0"/><rect x="100.9" y="434.87" width="1.5" height="1" fill="#989898"/><rect x="100.9" y="437.53" width="1.5" height="1" fill="#989898"/><rect x="100.9" y="440.20" width="1.5" height="1" fill="#989898"/><rect x="100.9" y="442.87" width="1.5" height="1" fill="#989898"/><rect x="91.2" y="445.53" width="11" height="1" fill="#828282"/><rect x="100.9" y="448.20" width="1.5" height="1" fill="#989898"/><rect x="100.9" y="450.87" width="1.5" height="1" fill="#989898"/><rect x="100.9" y="453.53" width="1.5" height="1" fill="#989898"/><rect x="100.9" y="456.20" width="1.5" height="1" fill="#989898"/><rect x="100.6" y="458.87" width="1.8" height="1" fill="#a0a0a0"/><rect x="100.9" y="461.53" width="1.5" height="1" fill="#989898"/><rect x="100.9" y="464.20" width="1.5" height="1" fill="#989898"/><rect x="100.9" y="466.87" width="1.5" height="1" fill="#989898"/><rect x="100.9" y="469.53" width="1.5" height="1" fill="#989898"/><rect x="91.2" y="472.20" width="11" height="1" fill="#828282"/><rect x="100.9" y="474.87" width="1.5" height="1" fill="#989898"/><rect x="100.9" y="477.53" width="1.5" height="1" fill="#989898"/><rect x="100.9" y="480.20" width="1.5" height="1" fill="#989898"/><rect x="100.9" y="482.87" width="1.5" height="1" fill="#989898"/><rect x="100.6" y="485.53" width="1.8" height="1" fill="#a0a0a0"/><rect x="100.9" y="488.20" width="1.5" height="1" fill="#989898"/><rect x="100.9" y="490.87" width="1.5" height="1" fill="#989898"/><rect x="100.9" y="493.53" width="1.5" height="1" fill="#989898"/><rect x="100.9" y="496.20" width="1.5" height="1" fill="#989898"/><rect x="91.2" y="498.87" width="11" height="1" fill="#828282"/><rect x="100.9" y="501.53" width="1.5" height="1" fill="#989898"/><rect x="100.9" y="504.20" width="1.5" height="1" fill="#989898"/><rect x="100.9" y="506.87" width="1.5" height="1" fill="#989898"/><rect x="100.9" y="509.53" width="1.5" height="1" fill="#989898"/><rect x="100.6" y="512.20" width="1.8" height="1" fill="#a0a0a0"/><rect x="100.9" y="514.87" width="1.5" height="1" fill="#989898"/><rect x="100.9" y="517.53" width="1.5" height="1" fill="#989898"/><rect x="100.9" y="520.20" width="1.5" height="1" fill="#989898"/><rect x="100.9" y="522.87" width="1.5" height="1" fill="#989898"/><rect x="91.2" y="525.53" width="11" height="1" fill="#828282"/><rect x="100.9" y="528.20" width="1.5" height="1" fill="#989898"/><rect x="100.9" y="530.87" width="1.5" height="1" fill="#989898"/><rect x="100.9" y="533.53" width="1.5" height="1" fill="#989898"/><rect x="100.9" y="536.20" width="1.5" height="1" fill="#989898"/><rect x="100.6" y="538.87" width="1.8" height="1" fill="#a0a0a0"/><rect x="100.9" y="541.53" width="1.5" height="1" fill="#989898"/><rect x="100.9" y="544.20" width="1.5" height="1" fill="#989898"/><rect x="100.9" y="546.87" width="1.5" height="1" fill="#989898"/><rect x="100.9" y="549.53" width="1.5" height="1" fill="#989898"/><rect x="91.2" y="552.20" width="11" height="1" fill="#828282"/><rect x="100.9" y="554.87" width="1.5" height="1" fill="#989898"/><rect x="100.9" y="557.53" width="1.5" height="1" fill="#989898"/><rect x="100.9" y="560.20" width="1.5" height="1" fill="#989898"/><rect x="100.9" y="562.87" width="1.5" height="1" fill="#989898"/><rect x="100.6" y="565.53" width="1.8" height="1" fill="#a0a0a0"/><rect x="100.9" y="568.20" width="1.5" height="1" fill="#989898"/><rect x="100.9" y="570.87" width="1.5" height="1" fill="#989898"/><rect x="100.9" y="573.53" width="1.5" height="1" fill="#989898"/><rect x="100.9" y="576.20" width="1.5" height="1" fill="#989898"/><rect x="91.2" y="578.87" width="11" height="1" fill="#828282"/><rect x="100.9" y="581.53" width="1.5" height="1" fill="#989898"/><rect x="100.9" y="584.20" width="1.5" height="1" fill="#989898"/><rect x="100.9" y="586.87" width="1.5" height="1" fill="#989898"/><rect x="100.9" y="589.53" width="1.5" height="1" fill="#989898"/><rect x="100.6" y="592.20" width="1.8" height="1" fill="#a0a0a0"/><rect x="100.9" y="594.87" width="1.5" height="1" fill="#989898"/><rect x="100.9" y="597.53" width="1.5" height="1" fill="#989898"/><rect x="100.9" y="600.20" width="1.5" height="1" fill="#989898"/><rect x="100.9" y="602.87" width="1.5" height="1" fill="#989898"/><rect x="91.2" y="605.53" width="11" height="1" fill="#828282"/><rect x="100.9" y="608.20" width="1.5" height="1" fill="#989898"/><rect x="100.9" y="610.87" width="1.5" height="1" fill="#989898"/><rect x="100.9" y="613.53" width="1.5" height="1" fill="#989898"/><rect x="100.9" y="616.20" width="1.5" height="1" fill="#989898"/><rect x="100.6" y="618.87" width="1.8" height="1" fill="#a0a0a0"/><rect x="100.9" y="621.53" width="1.5" height="1" fill="#989898"/><rect x="100.9" y="624.20" width="1.5" height="1" fill="#989898"/><rect x="100.9" y="626.87" width="1.5" height="1" fill="#989898"/><rect x="100.9" y="629.53" width="1.5" height="1" fill="#989898"/><rect x="91.2" y="632.20" width="11" height="1" fill="#828282"/><rect x="100.9" y="634.87" width="1.5" height="1" fill="#989898"/><rect x="100.9" y="637.53" width="1.5" height="1" fill="#989898"/><rect x="100.9" y="640.20" width="1.5" height="1" fill="#989898"/><rect x="100.9" y="642.87" width="1.5" height="1" fill="#989898"/><rect x="100.6" y="645.53" width="1.8" height="1" fill="#a0a0a0"/><rect x="100.9" y="648.20" width="1.5" height="1" fill="#989898"/><rect x="100.9" y="650.87" width="1.5" height="1" fill="#989898"/><rect x="100.9" y="653.53" width="1.5" height="1" fill="#989898"/><rect x="100.9" y="656.20" width="1.5" height="1" fill="#989898"/><rect x="91.2" y="658.87" width="11" height="1" fill="#828282"/><rect x="100.9" y="661.53" width="1.5" height="1" fill="#989898"/><rect x="100.9" y="664.20" width="1.5" height="1" fill="#989898"/><rect x="100.9" y="666.87" width="1.5" height="1" fill="#989898"/><rect x="100.9" y="669.53" width="1.5" height="1" fill="#989898"/><rect x="100.6" y="672.20" width="1.8" height="1" fill="#a0a0a0"/><rect x="100.9" y="674.87" width="1.5" height="1" fill="#989898"/><rect x="100.9" y="677.53" width="1.5" height="1" fill="#989898"/><rect x="100.9" y="680.20" width="1.5" height="1" fill="#989898"/><rect x="100.9" y="682.87" width="1.5" height="1" fill="#989898"/><rect x="91.2" y="685.53" width="11" height="1" fill="#828282"/><rect x="100.9" y="688.20" width="1.5" height="1" fill="#989898"/><rect x="100.9" y="690.87" width="1.5" height="1" fill="#989898"/><rect x="100.9" y="693.53" width="1.5" height="1" fill="#989898"/><rect x="100.9" y="696.20" width="1.5" height="1" fill="#989898"/><rect x="100.6" y="698.87" width="1.8" height="1" fill="#a0a0a0"/><rect x="100.9" y="701.53" width="1.5" height="1" fill="#989898"/><rect x="100.9" y="704.20" width="1.5" height="1" fill="#989898"/><rect x="100.9" y="706.87" width="1.5" height="1" fill="#989898"/><rect x="100.9" y="709.53" width="1.5" height="1" fill="#989898"/><rect x="91.2" y="712.20" width="11" height="1" fill="#828282"/><rect x="100.9" y="714.87" width="1.5" height="1" fill="#989898"/><rect x="100.9" y="717.53" width="1.5" height="1" fill="#989898"/><rect x="100.9" y="720.20" width="1.5" height="1" fill="#989898"/><rect x="100.9" y="722.87" width="1.5" height="1" fill="#989898"/><rect x="100.6" y="725.53" width="1.8" height="1" fill="#a0a0a0"/><rect x="100.9" y="728.20" width="1.5" height="1" fill="#989898"/><rect x="100.9" y="730.87" width="1.5" height="1" fill="#989898"/><rect x="100.9" y="733.53" width="1.5" height="1" fill="#989898"/><rect x="100.9" y="736.20" width="1.5" height="1" fill="#989898"/><rect x="91.2" y="738.87" width="11" height="1" fill="#828282"/><rect x="100.9" y="741.53" width="1.5" height="1" fill="#989898"/><rect x="100.9" y="744.20" width="1.5" height="1" fill="#989898"/><rect x="100.9" y="746.87" width="1.5" height="1" fill="#989898"/><rect x="100.9" y="749.53" width="1.5" height="1" fill="#989898"/><rect x="100.6" y="752.20" width="1.8" height="1" fill="#a0a0a0"/><rect x="100.9" y="754.87" width="1.5" height="1" fill="#989898"/></svg>
<span class="a t" style="left:100.63px;top:112.50px;font-size:8.6px;line-height:10px;color:#fff;transform:scaleX(0.941);transform-origin:0 50%;">40</span>
<span class="a t" style="left:127.30px;top:112.50px;font-size:8.6px;line-height:10px;color:#fff;transform:scaleX(0.941);transform-origin:0 50%;">30</span>
<span class="a t" style="left:153.97px;top:112.50px;font-size:8.6px;line-height:10px;color:#fff;transform:scaleX(0.941);transform-origin:0 50%;">20</span>
<span class="a t" style="left:180.63px;top:112.50px;font-size:8.6px;line-height:10px;color:#fff;transform:scaleX(0.941);transform-origin:0 50%;">10</span>
<span class="a t" style="left:207.30px;top:112.50px;font-size:8.6px;line-height:10px;color:#fff;transform:scaleX(0.941);transform-origin:0 50%;">0</span>
<span class="a t" style="left:233.97px;top:112.50px;font-size:8.6px;line-height:10px;color:#fff;transform:scaleX(0.941);transform-origin:0 50%;">10</span>
<span class="a t" style="left:260.63px;top:112.50px;font-size:8.6px;line-height:10px;color:#fff;transform:scaleX(0.941);transform-origin:0 50%;">20</span>
<span class="a t" style="left:287.30px;top:112.50px;font-size:8.6px;line-height:10px;color:#fff;transform:scaleX(0.941);transform-origin:0 50%;">30</span>
<span class="a t" style="left:313.97px;top:112.50px;font-size:8.6px;line-height:10px;color:#fff;transform:scaleX(0.941);transform-origin:0 50%;">40</span>
<span class="a t" style="left:340.63px;top:112.50px;font-size:8.6px;line-height:10px;color:#fff;transform:scaleX(0.941);transform-origin:0 50%;">50</span>
<span class="a t" style="left:367.30px;top:112.50px;font-size:8.6px;line-height:10px;color:#fff;transform:scaleX(0.941);transform-origin:0 50%;">60</span>
<span class="a t" style="left:393.97px;top:112.50px;font-size:8.6px;line-height:10px;color:#fff;transform:scaleX(0.941);transform-origin:0 50%;">70</span>
<span class="a t" style="left:420.63px;top:112.50px;font-size:8.6px;line-height:10px;color:#fff;transform:scaleX(0.941);transform-origin:0 50%;">80</span>
<span class="a t" style="left:447.30px;top:112.50px;font-size:8.6px;line-height:10px;color:#fff;transform:scaleX(0.941);transform-origin:0 50%;">90</span>
<span class="a t" style="left:473.97px;top:112.50px;font-size:8.6px;line-height:10px;color:#fff;transform:scaleX(0.941);transform-origin:0 50%;">100</span>
<span class="a t" style="left:500.63px;top:112.50px;font-size:8.6px;line-height:10px;color:#fff;transform:scaleX(0.973);transform-origin:0 50%;">110</span>
<span class="a t" style="left:527.30px;top:112.50px;font-size:8.6px;line-height:10px;color:#fff;transform:scaleX(0.941);transform-origin:0 50%;">120</span>
<span class="a t" style="left:553.97px;top:112.50px;font-size:8.6px;line-height:10px;color:#fff;transform:scaleX(0.941);transform-origin:0 50%;">130</span>
<span class="a t" style="left:580.63px;top:112.50px;font-size:8.6px;line-height:10px;color:#fff;transform:scaleX(0.941);transform-origin:0 50%;">140</span>
<span class="a t" style="left:607.30px;top:112.50px;font-size:8.6px;line-height:10px;color:#fff;transform:scaleX(0.941);transform-origin:0 50%;">150</span>
<span class="a t" style="left:633.97px;top:112.50px;font-size:8.6px;line-height:10px;color:#fff;transform:scaleX(0.941);transform-origin:0 50%;">160</span>
<span class="a t" style="left:660.63px;top:112.50px;font-size:8.6px;line-height:10px;color:#fff;transform:scaleX(0.941);transform-origin:0 50%;">170</span>
<span class="a t" style="left:687.30px;top:112.50px;font-size:8.6px;line-height:10px;color:#fff;transform:scaleX(0.941);transform-origin:0 50%;">180</span>
<span class="a t" style="left:713.97px;top:112.50px;font-size:8.6px;line-height:10px;color:#fff;transform:scaleX(0.941);transform-origin:0 50%;">190</span>
<span class="a t" style="left:740.63px;top:112.50px;font-size:8.6px;line-height:10px;color:#fff;transform:scaleX(0.941);transform-origin:0 50%;">200</span>
<span class="a t" style="left:767.30px;top:112.50px;font-size:8.6px;line-height:10px;color:#fff;transform:scaleX(0.941);transform-origin:0 50%;">210</span>
<span class="a t" style="left:793.97px;top:112.50px;font-size:8.6px;line-height:10px;color:#fff;transform:scaleX(0.941);transform-origin:0 50%;">220</span>
<span class="a t" style="left:820.63px;top:112.50px;font-size:8.6px;line-height:10px;color:#fff;transform:scaleX(0.941);transform-origin:0 50%;">230</span>
<span class="a t" style="left:847.30px;top:112.50px;font-size:8.6px;line-height:10px;color:#fff;transform:scaleX(0.941);transform-origin:0 50%;">240</span>
<span class="a t" style="left:873.97px;top:112.50px;font-size:8.6px;line-height:10px;color:#fff;transform:scaleX(0.941);transform-origin:0 50%;">250</span>
<span class="a t" style="left:900.63px;top:112.50px;font-size:8.6px;line-height:10px;color:#fff;transform:scaleX(0.941);transform-origin:0 50%;">260</span>
<span class="a t" style="left:927.30px;top:112.50px;font-size:8.6px;line-height:10px;color:#fff;transform:scaleX(0.941);transform-origin:0 50%;">270</span>
<span class="a t" style="left:953.97px;top:112.50px;font-size:8.6px;line-height:10px;color:#fff;transform:scaleX(0.941);transform-origin:0 50%;">280</span>
<span class="a t" style="left:980.63px;top:112.50px;font-size:8.6px;line-height:10px;color:#fff;transform:scaleX(0.941);transform-origin:0 50%;">290</span>
<span class="a t" style="left:1007.30px;top:112.50px;font-size:8.6px;line-height:10px;color:#fff;transform:scaleX(0.941);transform-origin:0 50%;">300</span>
<span class="a t" style="left:1033.97px;top:112.50px;font-size:8.6px;line-height:10px;color:#fff;transform:scaleX(0.941);transform-origin:0 50%;">310</span>
<span class="a t" style="left:1060.63px;top:112.50px;font-size:8.6px;line-height:10px;color:#fff;transform:scaleX(0.941);transform-origin:0 50%;">320</span>
<span class="a t" style="left:1087.30px;top:112.50px;font-size:8.6px;line-height:10px;color:#fff;transform:scaleX(0.941);transform-origin:0 50%;">330</span>
<span class="a t" style="left:1113.97px;top:112.50px;font-size:8.6px;line-height:10px;color:#fff;transform:scaleX(0.941);transform-origin:0 50%;clip-path:inset(0 5.49px 0 0);">340</span>
<div class="a" style="left:90.8px;top:112.8px;width:12.5px;height:10.9px;background:#2b2b2b;"></div>
<svg class="a" style="left:92px;top:112.5px;" width="10.5" height="11.5" viewBox="0 0 10.5 11.5"><path d="M5.2 0 V11.5 M0 5.8 H10.5" stroke="#777" stroke-width="1" stroke-dasharray="1 1" fill="none"/></svg>
<span class="a t" style="left:93.05px;top:125.63px;font-size:8.1px;line-height:10px;color:#fff;transform:scaleX(0.943);transform-origin:50% 50%;">1</span>
<span class="a t" style="left:93.05px;top:132.23px;font-size:8.1px;line-height:10px;color:#fff;transform:scaleX(0.943);transform-origin:50% 50%;">0</span>
<span class="a t" style="left:93.05px;top:152.30px;font-size:8.1px;line-height:10px;color:#fff;transform:scaleX(0.943);transform-origin:50% 50%;">0</span>
<span class="a t" style="left:93.05px;top:178.97px;font-size:8.1px;line-height:10px;color:#fff;transform:scaleX(0.943);transform-origin:50% 50%;">1</span>
<span class="a t" style="left:93.05px;top:185.57px;font-size:8.1px;line-height:10px;color:#fff;transform:scaleX(0.943);transform-origin:50% 50%;">0</span>
<span class="a t" style="left:93.05px;top:205.63px;font-size:8.1px;line-height:10px;color:#fff;transform:scaleX(0.943);transform-origin:50% 50%;">2</span>
<span class="a t" style="left:93.05px;top:212.23px;font-size:8.1px;line-height:10px;color:#fff;transform:scaleX(0.943);transform-origin:50% 50%;">0</span>
<span class="a t" style="left:93.05px;top:232.30px;font-size:8.1px;line-height:10px;color:#fff;transform:scaleX(0.943);transform-origin:50% 50%;">3</span>
<span class="a t" style="left:93.05px;top:238.90px;font-size:8.1px;line-height:10px;color:#fff;transform:scaleX(0.943);transform-origin:50% 50%;">0</span>
<span class="a t" style="left:93.05px;top:258.97px;font-size:8.1px;line-height:10px;color:#fff;transform:scaleX(0.943);transform-origin:50% 50%;">4</span>
<span class="a t" style="left:93.05px;top:265.57px;font-size:8.1px;line-height:10px;color:#fff;transform:scaleX(0.943);transform-origin:50% 50%;">0</span>
<span class="a t" style="left:93.05px;top:285.63px;font-size:8.1px;line-height:10px;color:#fff;transform:scaleX(0.943);transform-origin:50% 50%;">5</span>
<span class="a t" style="left:93.05px;top:292.23px;font-size:8.1px;line-height:10px;color:#fff;transform:scaleX(0.943);transform-origin:50% 50%;">0</span>
<span class="a t" style="left:93.05px;top:312.30px;font-size:8.1px;line-height:10px;color:#fff;transform:scaleX(0.943);transform-origin:50% 50%;">6</span>
<span class="a t" style="left:93.05px;top:318.90px;font-size:8.1px;line-height:10px;color:#fff;transform:scaleX(0.943);transform-origin:50% 50%;">0</span>
<span class="a t" style="left:93.05px;top:338.97px;font-size:8.1px;line-height:10px;color:#fff;transform:scaleX(0.943);transform-origin:50% 50%;">7</span>
<span class="a t" style="left:93.05px;top:345.57px;font-size:8.1px;line-height:10px;color:#fff;transform:scaleX(0.943);transform-origin:50% 50%;">0</span>
<span class="a t" style="left:93.05px;top:365.63px;font-size:8.1px;line-height:10px;color:#fff;transform:scaleX(0.943);transform-origin:50% 50%;">8</span>
<span class="a t" style="left:93.05px;top:372.23px;font-size:8.1px;line-height:10px;color:#fff;transform:scaleX(0.943);transform-origin:50% 50%;">0</span>
<span class="a t" style="left:93.05px;top:392.30px;font-size:8.1px;line-height:10px;color:#fff;transform:scaleX(0.943);transform-origin:50% 50%;">9</span>
<span class="a t" style="left:93.05px;top:398.90px;font-size:8.1px;line-height:10px;color:#fff;transform:scaleX(0.943);transform-origin:50% 50%;">0</span>
<span class="a t" style="left:93.05px;top:418.97px;font-size:8.1px;line-height:10px;color:#fff;transform:scaleX(0.943);transform-origin:50% 50%;">1</span>
<span class="a t" style="left:93.05px;top:425.57px;font-size:8.1px;line-height:10px;color:#fff;transform:scaleX(0.943);transform-origin:50% 50%;">0</span>
<span class="a t" style="left:93.05px;top:432.17px;font-size:8.1px;line-height:10px;color:#fff;transform:scaleX(0.943);transform-origin:50% 50%;">0</span>
<span class="a t" style="left:93.05px;top:445.63px;font-size:8.1px;line-height:10px;color:#fff;transform:scaleX(0.943);transform-origin:50% 50%;">1</span>
<span class="a t" style="left:93.05px;top:452.23px;font-size:8.1px;line-height:10px;color:#fff;transform:scaleX(0.943);transform-origin:50% 50%;">1</span>
<span class="a t" style="left:93.05px;top:458.83px;font-size:8.1px;line-height:10px;color:#fff;transform:scaleX(0.943);transform-origin:50% 50%;">0</span>
<span class="a t" style="left:93.05px;top:472.30px;font-size:8.1px;line-height:10px;color:#fff;transform:scaleX(0.943);transform-origin:50% 50%;">1</span>
<span class="a t" style="left:93.05px;top:478.90px;font-size:8.1px;line-height:10px;color:#fff;transform:scaleX(0.943);transform-origin:50% 50%;">2</span>
<span class="a t" style="left:93.05px;top:485.50px;font-size:8.1px;line-height:10px;color:#fff;transform:scaleX(0.943);transform-origin:50% 50%;">0</span>
<span class="a t" style="left:93.05px;top:498.97px;font-size:8.1px;line-height:10px;color:#fff;transform:scaleX(0.943);transform-origin:50% 50%;">1</span>
<span class="a t" style="left:93.05px;top:505.57px;font-size:8.1px;line-height:10px;color:#fff;transform:scaleX(0.943);transform-origin:50% 50%;">3</span>
<span class="a t" style="left:93.05px;top:512.17px;font-size:8.1px;line-height:10px;color:#fff;transform:scaleX(0.943);transform-origin:50% 50%;">0</span>
<span class="a t" style="left:93.05px;top:525.63px;font-size:8.1px;line-height:10px;color:#fff;transform:scaleX(0.943);transform-origin:50% 50%;">1</span>
<span class="a t" style="left:93.05px;top:532.23px;font-size:8.1px;line-height:10px;color:#fff;transform:scaleX(0.943);transform-origin:50% 50%;">4</span>
<span class="a t" style="left:93.05px;top:538.83px;font-size:8.1px;line-height:10px;color:#fff;transform:scaleX(0.943);transform-origin:50% 50%;">0</span>
<span class="a t" style="left:93.05px;top:552.30px;font-size:8.1px;line-height:10px;color:#fff;transform:scaleX(0.943);transform-origin:50% 50%;">1</span>
<span class="a t" style="left:93.05px;top:558.90px;font-size:8.1px;line-height:10px;color:#fff;transform:scaleX(0.943);transform-origin:50% 50%;">5</span>
<span class="a t" style="left:93.05px;top:565.50px;font-size:8.1px;line-height:10px;color:#fff;transform:scaleX(0.943);transform-origin:50% 50%;">0</span>
<span class="a t" style="left:93.05px;top:578.97px;font-size:8.1px;line-height:10px;color:#fff;transform:scaleX(0.943);transform-origin:50% 50%;">1</span>
<span class="a t" style="left:93.05px;top:585.57px;font-size:8.1px;line-height:10px;color:#fff;transform:scaleX(0.943);transform-origin:50% 50%;">6</span>
<span class="a t" style="left:93.05px;top:592.17px;font-size:8.1px;line-height:10px;color:#fff;transform:scaleX(0.943);transform-origin:50% 50%;">0</span>
<span class="a t" style="left:93.05px;top:605.63px;font-size:8.1px;line-height:10px;color:#fff;transform:scaleX(0.943);transform-origin:50% 50%;">1</span>
<span class="a t" style="left:93.05px;top:612.23px;font-size:8.1px;line-height:10px;color:#fff;transform:scaleX(0.943);transform-origin:50% 50%;">7</span>
<span class="a t" style="left:93.05px;top:618.83px;font-size:8.1px;line-height:10px;color:#fff;transform:scaleX(0.943);transform-origin:50% 50%;">0</span>
<span class="a t" style="left:93.05px;top:632.30px;font-size:8.1px;line-height:10px;color:#fff;transform:scaleX(0.943);transform-origin:50% 50%;">1</span>
<span class="a t" style="left:93.05px;top:638.90px;font-size:8.1px;line-height:10px;color:#fff;transform:scaleX(0.943);transform-origin:50% 50%;">8</span>
<span class="a t" style="left:93.05px;top:645.50px;font-size:8.1px;line-height:10px;color:#fff;transform:scaleX(0.943);transform-origin:50% 50%;">0</span>
<span class="a t" style="left:93.05px;top:658.97px;font-size:8.1px;line-height:10px;color:#fff;transform:scaleX(0.943);transform-origin:50% 50%;">1</span>
<span class="a t" style="left:93.05px;top:665.57px;font-size:8.1px;line-height:10px;color:#fff;transform:scaleX(0.943);transform-origin:50% 50%;">9</span>
<span class="a t" style="left:93.05px;top:672.17px;font-size:8.1px;line-height:10px;color:#fff;transform:scaleX(0.943);transform-origin:50% 50%;">0</span>
<span class="a t" style="left:93.05px;top:685.63px;font-size:8.1px;line-height:10px;color:#fff;transform:scaleX(0.943);transform-origin:50% 50%;">2</span>
<span class="a t" style="left:93.05px;top:692.23px;font-size:8.1px;line-height:10px;color:#fff;transform:scaleX(0.943);transform-origin:50% 50%;">0</span>
<span class="a t" style="left:93.05px;top:698.83px;font-size:8.1px;line-height:10px;color:#fff;transform:scaleX(0.943);transform-origin:50% 50%;">0</span>
<span class="a t" style="left:93.05px;top:712.30px;font-size:8.1px;line-height:10px;color:#fff;transform:scaleX(0.943);transform-origin:50% 50%;">2</span>
<span class="a t" style="left:93.05px;top:718.90px;font-size:8.1px;line-height:10px;color:#fff;transform:scaleX(0.943);transform-origin:50% 50%;">1</span>
<span class="a t" style="left:93.05px;top:725.50px;font-size:8.1px;line-height:10px;color:#fff;transform:scaleX(0.943);transform-origin:50% 50%;">0</span>
<span class="a t" style="left:93.05px;top:738.97px;font-size:8.1px;line-height:10px;color:#fff;transform:scaleX(0.943);transform-origin:50% 50%;">2</span>
<span class="a t" style="left:93.05px;top:745.57px;font-size:8.1px;line-height:10px;color:#fff;transform:scaleX(0.943);transform-origin:50% 50%;">2</span>
<div class="a" style="left:1122.5px;top:112.5px;width:10.5px;height:645px;background:#5c5c5c;"></div>
<div class="a" style="left:1123.5px;top:170px;width:8px;height:420px;background:#6f6f6f;border-radius:4px;"></div>
<div class="a" style="left:1122.5px;top:738px;width:10.5px;height:19px;background:#5f5f5f;"></div>
<svg class="a" style="left:42.5px;top:63.5px;" width="3" height="16" viewBox="0 0 3 16"><path d="M1.5 0 V15" stroke="#474747" stroke-width="2" stroke-dasharray="1 1"/></svg>
<div class="a" style="left:55.5px;top:58.5px;width:24.5px;height:25px;background:#5b5b5b;border-radius:1.5px;"></div>
<svg class="a" style="left:0px;top:0px;" width="1200" height="800" viewBox="0 0 1200 800"><path d="M61.3 64.6 H74.5 M61.3 71.2 H74.5 M61.3 77.8 H74.5 M61.3 64.6 V77.8 M67.9 64.6 V77.8 M74.5 64.6 V77.8" stroke="#d8d8d8" stroke-width=".8" fill="none"/><rect x="59.199999999999996" y="62.49999999999999" width="4.2" height="4.2" fill="#5b5b5b" stroke="#e4e4e4" stroke-width=".9"/><rect x="59.199999999999996" y="69.10000000000001" width="4.2" height="4.2" fill="#5b5b5b" stroke="#e4e4e4" stroke-width=".9"/><rect x="59.199999999999996" y="75.7" width="4.2" height="4.2" fill="#5b5b5b" stroke="#e4e4e4" stroke-width=".9"/><rect x="65.80000000000001" y="62.49999999999999" width="4.2" height="4.2" fill="#5b5b5b" stroke="#e4e4e4" stroke-width=".9"/><rect x="65.80000000000001" y="69.10000000000001" width="4.2" height="4.2" fill="#5b5b5b" stroke="#e4e4e4" stroke-width=".9"/><rect x="65.80000000000001" y="75.7" width="4.2" height="4.2" fill="#fff" stroke="#e4e4e4" stroke-width=".9"/><rect x="72.4" y="62.49999999999999" width="4.2" height="4.2" fill="#5b5b5b" stroke="#e4e4e4" stroke-width=".9"/><rect x="72.4" y="69.10000000000001" width="4.2" height="4.2" fill="#5b5b5b" stroke="#e4e4e4" stroke-width=".9"/><rect x="72.4" y="75.7" width="4.2" height="4.2" fill="#5b5b5b" stroke="#e4e4e4" stroke-width=".9"/></svg>
<span class="a t" style="left:85.30px;top:57.00px;font-size:9px;line-height:11px;color:#fff;transform:scaleX(0.755);transform-origin:0 50%;">X:</span>
<span class="a t" style="left:85.30px;top:75.30px;font-size:9px;line-height:11px;color:#fff;transform:scaleX(0.816);transform-origin:0 50%;">Y:</span>
<div class="a" style="left:95.3px;top:55.5px;width:10.8px;height:13.4px;background:#464646;border:1px solid #686868;box-sizing:border-box;border-radius:1.5px;"></div>
<svg class="a" style="left:95.3px;top:55.5px;" width="10.8" height="13.4" viewBox="0 0 10.8 13.4"><path transform="translate(5.4 3.9)" d="M-2.8 1.4 L0 -1.4 L2.8 1.4" fill="none" stroke="#e0e0e0" stroke-width="1.1"/><path transform="translate(5.4 9.5)" d="M-2.8 -1.4 L0 1.4 L2.8 -1.4" fill="none" stroke="#e0e0e0" stroke-width="1.1"/></svg>
<div class="a" style="left:107.2px;top:55.5px;width:48px;height:13.4px;background:#464646;border:1px solid #686868;box-sizing:border-box;border-radius:1.5px;"></div>
<span class="a t" style="left:110.40px;top:56.90px;font-size:9px;line-height:11px;color:#fff;transform:scaleX(0.860);transform-origin:0 50%;">152,25 mm</span>
<div class="a" style="left:95.3px;top:73.8px;width:10.8px;height:13.4px;background:#464646;border:1px solid #686868;box-sizing:border-box;border-radius:1.5px;"></div>
<svg class="a" style="left:95.3px;top:73.8px;" width="10.8" height="13.4" viewBox="0 0 10.8 13.4"><path transform="translate(5.4 3.9)" d="M-2.8 1.4 L0 -1.4 L2.8 1.4" fill="none" stroke="#e0e0e0" stroke-width="1.1"/><path transform="translate(5.4 9.5)" d="M-2.8 -1.4 L0 1.4 L2.8 -1.4" fill="none" stroke="#e0e0e0" stroke-width="1.1"/></svg>
<div class="a" style="left:107.2px;top:73.8px;width:48px;height:13.4px;background:#464646;border:1px solid #686868;box-sizing:border-box;border-radius:1.5px;"></div>
<span class="a t" style="left:110.40px;top:75.20px;font-size:9px;line-height:11px;color:#fff;transform:scaleX(0.848);transform-origin:0 50%;">171,824 mm</span>
<span class="a t" style="left:164.50px;top:57.00px;font-size:9px;line-height:11px;color:#fff;transform:scaleX(0.759);transform-origin:0 50%;">W:</span>
<span class="a t" style="left:165.30px;top:75.30px;font-size:9px;line-height:11px;color:#fff;transform:scaleX(0.758);transform-origin:0 50%;">H:</span>
<div class="a" style="left:175px;top:55.5px;width:10.8px;height:13.4px;background:#464646;border:1px solid #686868;box-sizing:border-box;border-radius:1.5px;"></div>
<svg class="a" style="left:175px;top:55.5px;" width="10.8" height="13.4" viewBox="0 0 10.8 13.4"><path transform="translate(5.4 3.9)" d="M-2.8 1.4 L0 -1.4 L2.8 1.4" fill="none" stroke="#e0e0e0" stroke-width="1.1"/><path transform="translate(5.4 9.5)" d="M-2.8 -1.4 L0 1.4 L2.8 -1.4" fill="none" stroke="#e0e0e0" stroke-width="1.1"/></svg>
<div class="a" style="left:187.2px;top:55.5px;width:48.3px;height:13.4px;background:#464646;border:1px solid #686868;box-sizing:border-box;border-radius:1.5px;"></div>
<span class="a t" style="left:190.40px;top:56.90px;font-size:9px;line-height:11px;color:#fff;transform:scaleX(0.852);transform-origin:0 50%;">203,147 mm</span>
<div class="a" style="left:175px;top:73.8px;width:10.8px;height:13.4px;background:#464646;border:1px solid #686868;box-sizing:border-box;border-radius:1.5px;"></div>
<svg class="a" style="left:175px;top:73.8px;" width="10.8" height="13.4" viewBox="0 0 10.8 13.4"><path transform="translate(5.4 3.9)" d="M-2.8 1.4 L0 -1.4 L2.8 1.4" fill="none" stroke="#e0e0e0" stroke-width="1.1"/><path transform="translate(5.4 9.5)" d="M-2.8 -1.4 L0 1.4 L2.8 -1.4" fill="none" stroke="#e0e0e0" stroke-width="1.1"/></svg>
<div class="a" style="left:187.2px;top:73.8px;width:48.3px;height:13.4px;background:#464646;border:1px solid #686868;box-sizing:border-box;border-radius:1.5px;"></div>
<span class="a t" style="left:190.40px;top:75.20px;font-size:9px;line-height:11px;color:#fff;transform:scaleX(0.852);transform-origin:0 50%;">127,647 mm</span>
<svg class="a" style="left:242px;top:63px;" width="11" height="15" viewBox="0 0 11 15"><g fill="none" stroke="#a9a9a9" stroke-width="1.05"><path d="M3.6 5.6 L2.7 4.2 A1.9 1.9 0 0 1 5.9 2.2 L6.8 3.6"/><path d="M7.4 9.4 L8.3 10.8 A1.9 1.9 0 0 1 5.1 12.8 L4.2 11.4"/><path d="M4.4 4.8 L6.6 10.2"/><path d="M1.6 7.8 L3 7.3 M9.4 7.2 L8 7.7"/></g></svg>
<div class="a" style="left:265px;top:56.7px;width:10.4px;height:11px;border:1px solid #c9c9c9;box-sizing:border-box;"></div>
<svg class="a" style="left:265px;top:56.7px;" width="10.4" height="11" viewBox="0 0 10.4 11"><path d="M2.4 5.5 H7.2 M5.6 3.6 L7.6 5.5 L5.6 7.4" stroke="#d0d0d0" stroke-width="1" fill="none"/></svg>
<div class="a" style="left:279.5px;top:55.5px;width:10.8px;height:13.4px;background:#464646;border:1px solid #686868;box-sizing:border-box;border-radius:1.5px;"></div>
<svg class="a" style="left:279.5px;top:55.5px;" width="10.8" height="13.4" viewBox="0 0 10.8 13.4"><path transform="translate(5.4 3.9)" d="M-2.8 1.4 L0 -1.4 L2.8 1.4" fill="none" stroke="#e0e0e0" stroke-width="1.1"/><path transform="translate(5.4 9.5)" d="M-2.8 -1.4 L0 1.4 L2.8 -1.4" fill="none" stroke="#e0e0e0" stroke-width="1.1"/></svg>
<div class="a" style="left:291.6px;top:55.5px;width:35px;height:13.4px;background:#464646;border:1px solid #686868;box-sizing:border-box;border-radius:1.5px;"></div>
<span class="a t" style="left:294.80px;top:56.90px;font-size:9px;line-height:11px;color:#fff;transform:scaleX(0.847);transform-origin:0 50%;">100%</span>
<div class="a" style="left:327.4px;top:55.5px;width:12.3px;height:13.4px;background:#464646;border:1px solid #686868;box-sizing:border-box;border-radius:1.5px;"></div>
<svg class="a" style="left:327.4px;top:55.5px;" width="12.3" height="13.4" viewBox="0 0 12.3 13.4"><path transform="translate(6.15 7.0)" d="M-3.0 -1.5 L0 1.5 L3.0 -1.5" fill="none" stroke="#e0e0e0" stroke-width="1.1"/></svg>
<div class="a" style="left:265px;top:75px;width:10.4px;height:11px;border:1px solid #c9c9c9;box-sizing:border-box;"></div>
<svg class="a" style="left:265px;top:75px;" width="10.4" height="11" viewBox="0 0 10.4 11"><path d="M5.2 2.4 V7.6 M3.4 6 L5.2 8 L7 6" stroke="#d0d0d0" stroke-width="1" fill="none"/></svg>
<div class="a" style="left:279.5px;top:73.8px;width:10.8px;height:13.4px;background:#464646;border:1px solid #686868;box-sizing:border-box;border-radius:1.5px;"></div>
<svg class="a" style="left:279.5px;top:73.8px;" width="10.8" height="13.4" viewBox="0 0 10.8 13.4"><path transform="translate(5.4 3.9)" d="M-2.8 1.4 L0 -1.4 L2.8 1.4" fill="none" stroke="#e0e0e0" stroke-width="1.1"/><path transform="translate(5.4 9.5)" d="M-2.8 -1.4 L0 1.4 L2.8 -1.4" fill="none" stroke="#e0e0e0" stroke-width="1.1"/></svg>
<div class="a" style="left:291.6px;top:73.8px;width:35px;height:13.4px;background:#464646;border:1px solid #686868;box-sizing:border-box;border-radius:1.5px;"></div>
<span class="a t" style="left:294.80px;top:75.20px;font-size:9px;line-height:11px;color:#fff;transform:scaleX(0.847);transform-origin:0 50%;">100%</span>
<div class="a" style="left:327.4px;top:73.8px;width:12.3px;height:13.4px;background:#464646;border:1px solid #686868;box-sizing:border-box;border-radius:1.5px;"></div>
<svg class="a" style="left:327.4px;top:73.8px;" width="12.3" height="13.4" viewBox="0 0 12.3 13.4"><path transform="translate(6.15 7.0)" d="M-3.0 -1.5 L0 1.5 L3.0 -1.5" fill="none" stroke="#e0e0e0" stroke-width="1.1"/></svg>
<div class="a" style="left:344.5px;top:64px;width:15.5px;height:14.3px;background:#2e2e2e;border-radius:2px;"></div>
<svg class="a" style="left:344.5px;top:64px;" width="15.5" height="14.3" viewBox="0 0 15.5 14.3"><g fill="none" stroke="#e8e8e8" stroke-width="1.25"><rect x="5.7" y="2.4" width="4.1" height="5.6" rx="2"/><rect x="5.7" y="6.4" width="4.1" height="5.6" rx="2"/></g></svg>
<svg class="a" style="left:366.5px;top:57px;" width="10" height="10" viewBox="0 0 10 10"><path d="M9.4 8.2 H1 L7.6 1.6" fill="none" stroke="#bdbdbd" stroke-width="1.1"/><path d="M4.4 8.2 A3.4 3.4 0 0 0 3.4 5.7" fill="none" stroke="#bdbdbd" stroke-width="1"/></svg>
<svg class="a" style="left:366.5px;top:75.5px;" width="10" height="10" viewBox="0 0 10 10"><path d="M3.4 1.6 H9.4 L6.6 8.4 H0.6 Z" fill="#bdbdbd"/></svg>
<div class="a" style="left:379.5px;top:55.5px;width:10.8px;height:13.4px;background:#464646;border:1px solid #686868;box-sizing:border-box;border-radius:1.5px;"></div>
<svg class="a" style="left:379.5px;top:55.5px;" width="10.8" height="13.4" viewBox="0 0 10.8 13.4"><path transform="translate(5.4 3.9)" d="M-2.8 1.4 L0 -1.4 L2.8 1.4" fill="none" stroke="#e0e0e0" stroke-width="1.1"/><path transform="translate(5.4 9.5)" d="M-2.8 -1.4 L0 1.4 L2.8 -1.4" fill="none" stroke="#e0e0e0" stroke-width="1.1"/></svg>
<div class="a" style="left:391.7px;top:55.5px;width:35.5px;height:13.4px;background:#464646;border:1px solid #686868;box-sizing:border-box;border-radius:1.5px;"></div>
<span class="a t" style="left:394.90px;top:56.90px;font-size:9px;line-height:11px;color:#fff;transform:scaleX(0.837);transform-origin:0 50%;">0°</span>
<div class="a" style="left:428px;top:55.5px;width:12px;height:13.4px;background:#464646;border:1px solid #686868;box-sizing:border-box;border-radius:1.5px;"></div>
<svg class="a" style="left:428px;top:55.5px;" width="12" height="13.4" viewBox="0 0 12 13.4"><path transform="translate(6.0 7.0)" d="M-3.0 -1.5 L0 1.5 L3.0 -1.5" fill="none" stroke="#e0e0e0" stroke-width="1.1"/></svg>
<div class="a" style="left:379.5px;top:73.8px;width:10.8px;height:13.4px;background:#464646;border:1px solid #686868;box-sizing:border-box;border-radius:1.5px;"></div>
<svg class="a" style="left:379.5px;top:73.8px;" width="10.8" height="13.4" viewBox="0 0 10.8 13.4"><path transform="translate(5.4 3.9)" d="M-2.8 1.4 L0 -1.4 L2.8 1.4" fill="none" stroke="#e0e0e0" stroke-width="1.1"/><path transform="translate(5.4 9.5)" d="M-2.8 -1.4 L0 1.4 L2.8 -1.4" fill="none" stroke="#e0e0e0" stroke-width="1.1"/></svg>
<div class="a" style="left:391.7px;top:73.8px;width:35.5px;height:13.4px;background:#464646;border:1px solid #686868;box-sizing:border-box;border-radius:1.5px;"></div>
<span class="a t" style="left:394.90px;top:75.20px;font-size:9px;line-height:11px;color:#fff;transform:scaleX(0.837);transform-origin:0 50%;">0°</span>
<div class="a" style="left:428px;top:73.8px;width:12px;height:13.4px;background:#464646;border:1px solid #686868;box-sizing:border-box;border-radius:1.5px;"></div>
<svg class="a" style="left:428px;top:73.8px;" width="12" height="13.4" viewBox="0 0 12 13.4"><path transform="translate(6.0 7.0)" d="M-3.0 -1.5 L0 1.5 L3.0 -1.5" fill="none" stroke="#e0e0e0" stroke-width="1.1"/></svg>
<svg class="a" style="left:449.5px;top:55.5px;" width="14" height="14" viewBox="0 0 14 14"><path d="M11.6 4.2 A5.3 5.3 0 1 0 12.2 8.6" fill="none" stroke="#8e8e8e" stroke-width="1.3"/><path d="M12.6 1 V5 H8.6 Z" fill="#8e8e8e"/></svg>
<svg class="a" style="left:468.5px;top:55.5px;" width="14" height="14" viewBox="0 0 14 14"><path d="M2.4 4.2 A5.3 5.3 0 1 1 1.8 8.6" fill="none" stroke="#8e8e8e" stroke-width="1.3"/><path d="M1.4 1 V5 H5.4 Z" fill="#8e8e8e"/></svg>
<svg class="a" style="left:449.5px;top:74px;" width="14" height="14" viewBox="0 0 14 14"><path d="M1 2.2 L5.6 7 L1 11.8 Z" fill="none" stroke="#bdbdbd" stroke-width="1"/><path d="M13 2.2 L8.4 7 L13 11.8 Z" fill="#bdbdbd"/><path d="M7 1 V13" stroke="#bdbdbd" stroke-width="1"/></svg>
<svg class="a" style="left:468.5px;top:74px;" width="14" height="14" viewBox="0 0 14 14"><path d="M2.4 1.2 L7 5.6 L11.6 1.2 Z" fill="none" stroke="#bdbdbd" stroke-width="1"/><path d="M2.4 12.8 L7 8.4 L11.6 12.8 Z" fill="#bdbdbd"/><path d="M1 7 H13" stroke="#bdbdbd" stroke-width="1"/></svg>
<div class="a" style="left:488px;top:61px;width:21px;height:20.5px;background:#5f5f5f;border-radius:2px;"></div>
<svg class="a" style="left:488px;top:61px;" width="21" height="20.5" viewBox="0 0 21 20.5"><g fill="none" stroke="#dcdcdc" stroke-width="1.1"><path d="M2 5 V2.2 H4.8"/><path d="M16.2 2.2 H19 V5"/><path d="M2 15.5 V18.3 H4.8"/><path d="M16.2 18.3 H19 V15.5"/></g></svg>
<span class="a t r" style="left:494.67px;top:62.90px;font-size:14.5px;line-height:17px;color:#f2f2f2;font-weight:normal;">P</span>
<svg class="a" style="left:518px;top:56.5px;" width="12" height="12" viewBox="0 0 12 12"><path d="M6 0.5 V4 M6 4 L3.6 2.2 M6 4 L8.4 2.2" stroke="#777" fill="none"/><circle cx="6" cy="6.2" r="1.2" fill="#777"/><circle cx="2.4" cy="9.6" r="1.2" fill="#777"/><circle cx="9.6" cy="9.6" r="1.2" fill="#777"/><path d="M6 6 V8 H2.4 M6 8 H9.6" stroke="#777" fill="none" stroke-width=".8"/></svg>
<svg class="a" style="left:538.5px;top:57px;" width="12" height="12" viewBox="0 0 12 12"><path d="M0.5 6 H3 M0.5 6 L2.2 4.4 M0.5 6 L2.2 7.6" stroke="#777" fill="none"/><circle cx="7.4" cy="4" r="1.2" fill="#777"/><circle cx="4.6" cy="8.6" r="1.2" fill="#777"/><circle cx="10.4" cy="8.6" r="1.2" fill="#777"/><path d="M7.4 4 V6.6 H4.6 M7.4 6.6 H10.4" stroke="#777" fill="none" stroke-width=".8"/></svg>
<svg class="a" style="left:518px;top:75px;" width="12" height="12" viewBox="0 0 12 12"><path d="M6 11.5 V8 M6 8 L3.6 9.8 M6 8 L8.4 9.8" stroke="#777" fill="none"/><circle cx="6" cy="2" r="1.2" fill="#777"/><circle cx="2.4" cy="5.6" r="1.2" fill="#777"/><circle cx="9.6" cy="5.6" r="1.2" fill="#777"/><path d="M6 2 V4 H2.4 M6 4 H9.6" stroke="#777" fill="none" stroke-width=".8"/></svg>
<svg class="a" style="left:538.5px;top:75px;" width="12" height="12" viewBox="0 0 12 12"><path d="M11.5 6 H9 M11.5 6 L9.8 4.4 M11.5 6 L9.8 7.6" stroke="#777" fill="none"/><circle cx="4.6" cy="4" r="1.2" fill="#777"/><circle cx="1.8" cy="8.6" r="1.2" fill="#777"/><circle cx="7.6" cy="8.6" r="1.2" fill="#777"/><path d="M4.6 4 V6.6 H1.8 M4.6 6.6 H7.6" stroke="#777" fill="none" stroke-width=".8"/></svg>
<div class="a" style="left:560.5px;top:55.5px;width:14px;height:13.4px;background:radial-gradient(circle at 50% 50%,#3da849 0%,#8dc33f 35%,#ccd42a 68%,#e1e560 100%);"></div>
<div class="a" style="left:577.3px;top:55.5px;width:10.8px;height:13.4px;background:#464646;border:1px solid #686868;box-sizing:border-box;border-radius:1.5px;"></div>
<svg class="a" style="left:577.3px;top:55.5px;" width="10.8" height="13.4" viewBox="0 0 10.8 13.4"><path d="M4.0 3.7 L7.0 6.7 L4.0 9.7" fill="none" stroke="#e0e0e0" stroke-width="1.1"/></svg>
<div class="a" style="left:560.5px;top:73.8px;width:14px;height:13.4px;background:#fff;"></div>
<div class="a" style="left:564.7px;top:77.8px;width:5.6px;height:5.4px;background:#4a4a4a;"></div>
<svg class="a" style="left:560.5px;top:73.8px;" width="14" height="13.4" viewBox="0 0 14 13.4"><path d="M0.6 12.8 L13.4 0.6" stroke="#e8131a" stroke-width="1.5"/></svg>
<div class="a" style="left:577.3px;top:73.8px;width:10.8px;height:13.4px;background:#464646;border:1px solid #686868;box-sizing:border-box;border-radius:1.5px;"></div>
<svg class="a" style="left:577.3px;top:73.8px;" width="10.8" height="13.4" viewBox="0 0 10.8 13.4"><path d="M4.0 3.7 L7.0 6.7 L4.0 9.7" fill="none" stroke="#e0e0e0" stroke-width="1.1"/></svg>
<div class="a" style="left:597.5px;top:55.5px;width:10.8px;height:13.4px;background:#464646;border:1px solid #686868;box-sizing:border-box;border-radius:1.5px;"></div>
<svg class="a" style="left:597.5px;top:55.5px;" width="10.8" height="13.4" viewBox="0 0 10.8 13.4"><path transform="translate(5.4 3.9)" d="M-2.8 1.4 L0 -1.4 L2.8 1.4" fill="none" stroke="#e0e0e0" stroke-width="1.1"/><path transform="translate(5.4 9.5)" d="M-2.8 -1.4 L0 1.4 L2.8 -1.4" fill="none" stroke="#e0e0e0" stroke-width="1.1"/></svg>
<div class="a" style="left:609.7px;top:55.5px;width:35.3px;height:13.4px;background:#464646;border:1px solid #686868;box-sizing:border-box;border-radius:1.5px;"></div>
<span class="a t" style="left:612.90px;top:56.90px;font-size:9px;line-height:11px;color:#fff;transform:scaleX(0.844);transform-origin:0 50%;">0 pt</span>
<div class="a" style="left:645.5px;top:55.5px;width:12.2px;height:13.4px;background:#464646;border:1px solid #686868;box-sizing:border-box;border-radius:1.5px;"></div>
<svg class="a" style="left:645.5px;top:55.5px;" width="12.2" height="13.4" viewBox="0 0 12.2 13.4"><path transform="translate(6.1 7.0)" d="M-3.0 -1.5 L0 1.5 L3.0 -1.5" fill="none" stroke="#e0e0e0" stroke-width="1.1"/></svg>
<div class="a" style="left:597.5px;top:73.8px;width:47.5px;height:13.4px;background:#f2f2f2;border-radius:1.5px;"></div>
<div class="a" style="left:600.3px;top:77.2px;width:38.5px;height:6.6px;background:#000;"></div>
<div class="a" style="left:645.5px;top:73.8px;width:12.2px;height:13.4px;background:#464646;border:1px solid #686868;box-sizing:border-box;border-radius:1.5px;"></div>
<svg class="a" style="left:645.5px;top:73.8px;" width="12.2" height="13.4" viewBox="0 0 12.2 13.4"><path transform="translate(6.1 7.0)" d="M-3.0 -1.5 L0 1.5 L3.0 -1.5" fill="none" stroke="#e0e0e0" stroke-width="1.1"/></svg>
<svg class="a" style="left:668px;top:56px;" width="13" height="13" viewBox="0 0 13 13"><rect x="1.2" y="1.2" width="9" height="9" fill="none" stroke="#c6c6c6" stroke-width="1.1" stroke-dasharray="2 1.1"/><path d="M11.6 10.6 L12.8 10.6 L12.2 11.6 Z" fill="#c6c6c6"/></svg>
<svg class="a" style="left:688px;top:56px;" width="13" height="13" viewBox="0 0 13 13"><rect x="2.2" y="2.6" width="9" height="8.6" fill="#6e6e6e"/><rect x="1.4" y="1.6" width="8.6" height="8.4" fill="#535353" stroke="#c6c6c6" stroke-width="1.1"/></svg>
<span class="a t" style="left:709.20px;top:55.70px;font-size:10.5px;line-height:13px;color:#c6c6c6;font-weight:normal;transform:scaleX(1.029);transform-origin:0 50%;font-style:italic;">fx</span>
<svg class="a" style="left:718.2px;top:66px;" width="3" height="2" viewBox="0 0 3 2"><path d="M0 0 H2.4 L1.2 1.6 Z" fill="#c6c6c6"/></svg>
<svg class="a" style="left:667px;top:75.3px;" width="10.5" height="10.5" viewBox="0 0 10.5 10.5"><rect x=".6" y=".6" width="9.2" height="9.2" fill="none" stroke="#a8a8a8" stroke-width="1"/><rect x="2.6" y="2.6" width="2.6" height="2.6" fill="#8a8a8a"/><rect x="5.2" y="5.2" width="2.6" height="2.6" fill="#8a8a8a"/><rect x="5.2" y="2.6" width="2.6" height="2.6" fill="#a6a6a6" opacity=".5"/><rect x="2.6" y="5.2" width="2.6" height="2.6" fill="#a6a6a6" opacity=".5"/></svg>
<div class="a" style="left:681px;top:73.8px;width:36.2px;height:13.4px;background:#464646;border:1px solid #686868;box-sizing:border-box;border-radius:1.5px;"></div>
<span class="a t" style="left:684.20px;top:75.20px;font-size:9px;line-height:11px;color:#fff;transform:scaleX(0.847);transform-origin:0 50%;">100%</span>
<div class="a" style="left:717.6px;top:73.8px;width:11.8px;height:13.4px;background:#464646;border:1px solid #686868;box-sizing:border-box;border-radius:1.5px;"></div>
<svg class="a" style="left:717.6px;top:73.8px;" width="11.8" height="13.4" viewBox="0 0 11.8 13.4"><path d="M4.5 3.7 L7.5 6.7 L4.5 9.7" fill="none" stroke="#e0e0e0" stroke-width="1.1"/></svg>
<div class="a" style="left:739.5px;top:54.7px;width:14.6px;height:14.6px;background:#2e2e2e;border-radius:2px;"></div>
<svg class="a" style="left:741px;top:56.2px;" width="11.6" height="11.6" viewBox="0 0 11.6 11.6"><path d="M0.6 1 H11" stroke="#d6d6d6" stroke-width="0.9"/><path d="M0.6 2.9 H11" stroke="#d6d6d6" stroke-width="0.9"/><path d="M0.6 4.8 H11" stroke="#d6d6d6" stroke-width="0.9"/><path d="M0.6 6.7 H11" stroke="#d6d6d6" stroke-width="0.9"/><path d="M0.6 8.6 H11" stroke="#d6d6d6" stroke-width="0.9"/><path d="M0.6 10.5 H11" stroke="#d6d6d6" stroke-width="0.9"/><rect x="2.6" y="3.6" width="6.4" height="4.4" fill="none" stroke="#efefef" stroke-width="1"/></svg>
<svg class="a" style="left:759.7px;top:56.2px;" width="11.6" height="11.6" viewBox="0 0 11.6 11.6"><path d="M0.6 1 H2.6" stroke="#b6b6b6" stroke-width="0.9"/><path d="M0.6 2.9 H2.6" stroke="#b6b6b6" stroke-width="0.9"/><path d="M0.6 4.8 H2.6" stroke="#b6b6b6" stroke-width="0.9"/><path d="M0.6 6.7 H2.6" stroke="#b6b6b6" stroke-width="0.9"/><path d="M0.6 8.6 H2.6" stroke="#b6b6b6" stroke-width="0.9"/><path d="M0.6 10.5 H2.6" stroke="#b6b6b6" stroke-width="0.9"/><path d="M9 1 H11" stroke="#b6b6b6" stroke-width="0.9"/><path d="M9 2.9 H11" stroke="#b6b6b6" stroke-width="0.9"/><path d="M9 4.8 H11" stroke="#b6b6b6" stroke-width="0.9"/><path d="M9 6.7 H11" stroke="#b6b6b6" stroke-width="0.9"/><path d="M9 8.6 H11" stroke="#b6b6b6" stroke-width="0.9"/><path d="M9 10.5 H11" stroke="#b6b6b6" stroke-width="0.9"/><rect x="3.4" y="0.6" width="4.8" height="10.4" fill="#8a8a8a" stroke="#c8c8c8" stroke-width=".9"/></svg>
<svg class="a" style="left:741px;top:74.8px;" width="11.6" height="11.6" viewBox="0 0 11.6 11.6"><path d="M0.6 1 H11" stroke="#b0b0b0" stroke-width="0.9"/><path d="M0.6 2.9 H11" stroke="#b0b0b0" stroke-width="0.9"/><path d="M0.6 4.8 H11" stroke="#b0b0b0" stroke-width="0.9"/><path d="M0.6 6.7 H11" stroke="#b0b0b0" stroke-width="0.9"/><path d="M0.6 8.6 H11" stroke="#b0b0b0" stroke-width="0.9"/><path d="M0.6 10.5 H11" stroke="#b0b0b0" stroke-width="0.9"/><circle cx="5.2" cy="6.4" r="3.1" fill="#9c9c9c" stroke="#c8c8c8" stroke-width=".8"/><circle cx="9.7" cy="1.9" r="2.6" fill="#2d8ceb"/></svg>
<svg class="a" style="left:759.7px;top:74.8px;" width="11.6" height="11.6" viewBox="0 0 11.6 11.6"><path d="M0.6 1 H11" stroke="#b6b6b6" stroke-width="0.9"/><path d="M0.6 10.5 H11" stroke="#b6b6b6" stroke-width="0.9"/><rect x="1.6" y="3.2" width="8.4" height="4.6" fill="#8a8a8a" stroke="#c8c8c8" stroke-width=".9"/><path d="M0.6 9 H11" stroke="#8a8a8a" stroke-width="0.9"/></svg>
<svg class="a" style="left:782.5px;top:57.5px;" width="11" height="11" viewBox="0 0 11 11"><g fill="#2d8ceb"><rect x="0" y="0" width="3" height="3"/><rect x="8" y="0" width="3" height="3"/><rect x="0" y="8" width="3" height="3"/><rect x="8" y="8" width="3" height="3"/></g><path d="M4 1.5 H7 M4 9.5 H7 M1.5 4 V7 M9.5 4 V7" stroke="#2d8ceb" stroke-width="1"/></svg>
<div class="a" style="left:797.5px;top:55.5px;width:10.8px;height:13.4px;background:#464646;border:1px solid #686868;box-sizing:border-box;border-radius:1.5px;"></div>
<svg class="a" style="left:797.5px;top:55.5px;" width="10.8" height="13.4" viewBox="0 0 10.8 13.4"><path transform="translate(5.4 3.9)" d="M-2.8 1.4 L0 -1.4 L2.8 1.4" fill="none" stroke="#e0e0e0" stroke-width="1.1"/><path transform="translate(5.4 9.5)" d="M-2.8 -1.4 L0 1.4 L2.8 -1.4" fill="none" stroke="#e0e0e0" stroke-width="1.1"/></svg>
<div class="a" style="left:809.7px;top:55.5px;width:47.8px;height:13.4px;background:#464646;border:1px solid #686868;box-sizing:border-box;border-radius:1.5px;"></div>
<span class="a t" style="left:812.90px;top:56.90px;font-size:9px;line-height:11px;color:#fff;transform:scaleX(0.865);transform-origin:0 50%;">4,233 mm</span>
<div class="a" style="left:797.3px;top:73.8px;width:47.8px;height:13.4px;background:#eeeeee;border-radius:1.5px;"></div>
<svg class="a" style="left:797.3px;top:73.8px;" width="47.8" height="13.4" viewBox="0 0 47.8 13.4"><path d="M1.6 2.2 H41.4 V12" fill="none" stroke="#111" stroke-width="1.4"/></svg>
<div class="a" style="left:845.6px;top:73.8px;width:12px;height:13.4px;background:#464646;border:1px solid #686868;box-sizing:border-box;border-radius:1.5px;"></div>
<svg class="a" style="left:845.6px;top:73.8px;" width="12" height="13.4" viewBox="0 0 12 13.4"><path transform="translate(6.0 7.0)" d="M-3.0 -1.5 L0 1.5 L3.0 -1.5" fill="none" stroke="#e0e0e0" stroke-width="1.1"/></svg>
<svg class="a" style="left:867.5px;top:55.8px;" width="13" height="13" viewBox="0 0 13 13"><rect x="1.6" y="1.6" width="9.8" height="8.8" fill="#7a7a7a"/><path d="M0.5 0.5 V12 M12.5 0.5 V12 M0.5 11.5 H12.5" stroke="#7a7a7a" fill="none" stroke-width=".8"/></svg>
<svg class="a" style="left:886.3px;top:55.8px;" width="13" height="13" viewBox="0 0 13 13"><rect x="2.4" y="1.2" width="7.2" height="10" fill="#7a7a7a"/><path d="M0.5 0.5 V12.5 M11.5 0.5 V12.5 M0.5 0.8 H3 M9 0.8 H11.5 M0.5 12 H3 M9 12 H11.5" stroke="#7a7a7a" fill="none" stroke-width=".8"/></svg>
<svg class="a" style="left:911px;top:55.8px;" width="13" height="13" viewBox="0 0 13 13"><rect x="1" y="1.4" width="11" height="10" fill="none" stroke="#7a7a7a" stroke-width="1"/><rect x="2.6" y="3" width="4" height="3.6" fill="#7a7a7a"/><path d="M8 3 H10.6 M8 5 H10.6 M2.6 8 H10.6 M2.6 9.8 H10.6" stroke="#7a7a7a" stroke-width=".8"/><path d="M0 0.4 H3 M0.4 0 V3 M13 0.4 H10 M12.6 0 V3" stroke="#7a7a7a" stroke-width=".8" fill="none"/></svg>
<svg class="a" style="left:929.8px;top:55.8px;" width="13" height="13" viewBox="0 0 13 13"><rect x="1" y="1.4" width="11" height="10" fill="none" stroke="#7a7a7a" stroke-width="1"/><rect x="6.4" y="3" width="4" height="3.6" fill="#7a7a7a"/><path d="M2.6 3 H5.2 M2.6 5 H5.2 M2.6 8 H10.6 M2.6 9.8 H10.6" stroke="#7a7a7a" stroke-width=".8"/><path d="M0 0.4 H3 M0.4 0 V3 M13 0.4 H10 M12.6 0 V3" stroke="#7a7a7a" stroke-width=".8" fill="none"/></svg>
<svg class="a" style="left:949.5px;top:55.8px;" width="13" height="13" viewBox="0 0 13 13"><rect x="1" y="1.4" width="11" height="10" fill="none" stroke="#7a7a7a" stroke-width="1"/><rect x="3.6" y="3.8" width="5.8" height="5.2" fill="#7a7a7a"/></svg>
<svg class="a" style="left:949.5px;top:74.5px;" width="13" height="13" viewBox="0 0 13 13"><rect x="1" y="1.4" width="11" height="10" fill="none" stroke="#7a7a7a" stroke-width="1" stroke-dasharray="1.5 1"/><rect x="3" y="3.2" width="7" height="6.4" fill="#7a7a7a"/></svg>
<div class="a" style="left:868px;top:76px;width:9px;height:9px;background:#4c4c4c;border:1px solid #8c8c8c;box-sizing:border-box;border-radius:1.5px;"></div>
<span class="a t" style="left:881.30px;top:75.20px;font-size:9px;line-height:11px;color:#fff;transform:scaleX(0.835);transform-origin:0 50%;">Auto-Fit</span>
<div class="a" style="left:968.5px;top:55px;width:1px;height:33px;background:#484848;"></div>
<svg class="a" style="left:973.8px;top:55.5px;" width="13" height="13.5" viewBox="0 0 13 13.5"><path d="M1 0.5 V13" stroke="#d2d2d2" stroke-width="1.2"/><rect x="2.6" y="2.4" width="6.4" height="3.4" fill="#d2d2d2"/><rect x="2.6" y="7.6" width="9.8" height="3.4" fill="#d2d2d2"/></svg>
<svg class="a" style="left:993.1px;top:55.5px;" width="13" height="13.5" viewBox="0 0 13 13.5"><path d="M6.5 0.5 V13" stroke="#d2d2d2" stroke-width="1.2"/><rect x="3.4" y="2.4" width="6.2" height="3.4" fill="#d2d2d2"/><rect x="1.4" y="7.6" width="10.2" height="3.4" fill="#d2d2d2"/></svg>
<svg class="a" style="left:1012.5px;top:55.5px;" width="13" height="13.5" viewBox="0 0 13 13.5"><path d="M12 0.5 V13" stroke="#d2d2d2" stroke-width="1.2"/><rect x="4" y="2.4" width="6.4" height="3.4" fill="#d2d2d2"/><rect x="0.6" y="7.6" width="9.8" height="3.4" fill="#d2d2d2"/></svg>
<svg class="a" style="left:1032.1px;top:55.5px;" width="13" height="13.5" viewBox="0 0 13 13.5"><rect x="1.6" y="1.8" width="9" height="9" fill="none" stroke="#d2d2d2" stroke-width="1.1" stroke-dasharray="2 1.1"/><rect x="0.4" y="0.6" width="2.4" height="2.4" fill="#d2d2d2"/><rect x="9.4" y="0.6" width="2.4" height="2.4" fill="#d2d2d2"/><rect x="0.4" y="9.6" width="2.4" height="2.4" fill="#d2d2d2"/><rect x="9.4" y="9.6" width="2.4" height="2.4" fill="#d2d2d2"/><path d="M12.6 10.6 H14.4 L13.5 11.8 Z" fill="#d2d2d2"/></svg>
<svg class="a" style="left:973.8px;top:74.5px;" width="13" height="13.5" viewBox="0 0 13 13.5"><path d="M0.5 1.4 H13" stroke="#d2d2d2" stroke-width="1.2"/><rect x="2.4" y="3" width="3.4" height="9.4" fill="#d2d2d2"/><rect x="7.6" y="3" width="3.4" height="5.6" fill="#d2d2d2"/></svg>
<svg class="a" style="left:993.1px;top:74.5px;" width="13" height="13.5" viewBox="0 0 13 13.5"><path d="M0.5 6.8 H13" stroke="#d2d2d2" stroke-width="1.2"/><rect x="2.4" y="1.8" width="3.4" height="10" fill="#d2d2d2"/><rect x="7.6" y="3.8" width="3.4" height="6" fill="#d2d2d2"/></svg>
<svg class="a" style="left:1012.5px;top:74.5px;" width="13" height="13.5" viewBox="0 0 13 13.5"><path d="M0.5 12.4 H13" stroke="#d2d2d2" stroke-width="1.2"/><rect x="2.4" y="1.4" width="3.4" height="9.6" fill="#d2d2d2"/><rect x="7.6" y="5.2" width="3.4" height="5.8" fill="#d2d2d2"/></svg>
<div class="a" style="left:1054px;top:55px;width:1px;height:33px;background:#484848;"></div>
<svg class="a" style="left:1125.4px;top:64px;" width="8" height="12" viewBox="0 0 8 12"><path d="M5 0.4 L1.4 6.4 H3.8 L2.8 11.4 L6.6 5 H4.2 Z" fill="#c4c4c4"/></svg>
<div class="a" style="left:1140px;top:53px;width:1px;height:38px;background:#484848;"></div>
<svg class="a" style="left:1146px;top:58px;" width="9" height="9" viewBox="0 0 9 9"><circle cx="4.5" cy="4.5" r="2.5" fill="none" stroke="#d0d0d0" stroke-width="1.5"/><g stroke="#d0d0d0" stroke-width="1.3"><path d="M4.5 0.4 V1.8 M4.5 7.2 V8.6 M0.4 4.5 H1.8 M7.2 4.5 H8.6 M1.6 1.6 L2.6 2.6 M6.4 6.4 L7.4 7.4 M7.4 1.6 L6.4 2.6 M1.6 7.4 L2.6 6.4"/></g></svg>
<svg class="a" style="left:1145.5px;top:77px;" width="10" height="8" viewBox="0 0 10 8"><path d="M0.5 1 H9.5 M0.5 4 H9.5 M0.5 7 H9.5" stroke="#c9c9c9" stroke-width="1.1"/></svg>
<div class="a" style="left:45px;top:112.8px;width:19.2px;height:14.8px;background:#2f2f2f;border-radius:2px;"></div>
<svg class="a" style="left:47.5px;top:113.3px;" width="14" height="14" viewBox="0 0 14 14"><path d="M3.6 1.2 L3.6 12.6 L6.6 9.6 L11.4 9 Z" fill="none" stroke="#e2e2e2" stroke-width="1.1" stroke-linejoin="miter"/></svg>
<svg class="a" style="left:69px;top:113.3px;" width="14" height="14" viewBox="0 0 14 14"><path d="M3.4 0.8 L3.4 13.2 L6.8 9.8 L12 9.2 Z" fill="#c9c9c9"/></svg>
<svg class="a" style="left:47.5px;top:129.8px;" width="14" height="14" viewBox="0 0 14 14"><path d="M2.4 1 H7.2 L10 3.8 V11.6 H2.4 Z" fill="none" stroke="#cdcdcd" stroke-width="1.1"/><path d="M7 1 V4 H10" fill="none" stroke="#cdcdcd" stroke-width=".9"/><path d="M8.2 7.6 L13 10.6 L10.8 11 L9.8 13.2 Z" fill="#cdcdcd" stroke="#535353" stroke-width=".5"/></svg>
<svg class="a" style="left:69px;top:129.8px;" width="14" height="14" viewBox="0 0 14 14"><path d="M1 2.4 V11.6 M13 2.4 V11.6" stroke="#cdcdcd" stroke-width="1.3"/><path d="M3 7 H11 M5 5 L3 7 L5 9 M9 5 L11 7 L9 9" fill="none" stroke="#cdcdcd" stroke-width="1.1"/></svg>
<svg class="a" style="left:47.5px;top:147.5px;" width="14" height="14" viewBox="0 0 14 14"><path d="M1.6 6.4 V12.6 H12.4 V6.4" fill="none" stroke="#cdcdcd" stroke-width="1.3"/><rect x="3.4" y="8" width="7.2" height="3.2" fill="#cdcdcd"/><path d="M3.4 9.6 H10.6 M5.8 8 V11.2 M8.2 8 V11.2" stroke="#535353" stroke-width=".5"/><path d="M4.6 1 L8.4 4.8 M8.8 2.4 V5.4 H5.8" fill="none" stroke="#cdcdcd" stroke-width="1.2"/></svg>
<svg class="a" style="left:69px;top:147.5px;" width="14" height="14" viewBox="0 0 14 14"><path d="M1.6 6.4 V12.6 H12.4 V6.4" fill="none" stroke="#cdcdcd" stroke-width="1.3"/><rect x="3.4" y="8" width="7.2" height="3.2" fill="#cdcdcd"/><path d="M3.4 9.6 H10.6 M5.8 8 V11.2 M8.2 8 V11.2" stroke="#535353" stroke-width=".5"/><path d="M8 5.4 L12 1.4 M9 1 H12.4 V4.4" fill="none" stroke="#cdcdcd" stroke-width="1.2"/></svg>
<div class="a" style="left:45px;top:163.3px;width:41px;height:1px;background:#484848;"></div>
<span class="a t r" style="left:49.46px;top:162.30px;font-size:16.5px;line-height:20px;color:#d6d6d6;font-weight:normal;transform:scaleX(1.151);transform-origin:50% 50%;">T</span>
<svg class="a" style="left:60.8px;top:176.8px;" width="3.4" height="3.4" viewBox="0 0 3.4 3.4"><path d="M3.2 0 V3.2 H0 Z" fill="#d8d8d8"/></svg>
<svg class="a" style="left:69px;top:165.7px;" width="14" height="14" viewBox="0 0 14 14"><path d="M2 12 L12 2" stroke="#cdcdcd" stroke-width="1.2"/></svg>
<svg class="a" style="left:47.5px;top:183.4px;" width="14" height="14" viewBox="0 0 14 14"><path d="M8.2 1 L12.6 5.4 L11 7 L6.6 2.6 Z" fill="#cdcdcd"/><path d="M6 3.4 L10.2 7.6 L8 11.2 L1.6 12.6 L3 6 Z" fill="#cdcdcd"/><path d="M2 12.2 L6 8.2" stroke="#535353" stroke-width=".9"/><circle cx="6.4" cy="7.8" r="1" fill="#535353"/></svg>
<svg class="a" style="left:60.8px;top:194.6px;" width="3.4" height="3.4" viewBox="0 0 3.4 3.4"><path d="M3.2 0 V3.2 H0 Z" fill="#d8d8d8"/></svg>
<svg class="a" style="left:69px;top:183.4px;" width="14" height="14" viewBox="0 0 14 14"><path d="M9.8 1 L13 4.2 L11.6 5.6 L8.4 2.4 Z" fill="#cdcdcd"/><path d="M7.6 3.2 L10.8 6.4 L4.6 12.6 L1 13 L1.4 9.4 Z" fill="#cdcdcd"/><path d="M1.2 12.9 L2.6 11.4" stroke="#535353" stroke-width="1"/></svg>
<svg class="a" style="left:82.2px;top:194.6px;" width="3.4" height="3.4" viewBox="0 0 3.4 3.4"><path d="M3.2 0 V3.2 H0 Z" fill="#d8d8d8"/></svg>
<svg class="a" style="left:47.5px;top:199.6px;" width="14" height="14" viewBox="0 0 14 14"><rect x="1.2" y="1.6" width="11.6" height="10.6" fill="none" stroke="#cdcdcd" stroke-width="1.2"/><path d="M1.2 1.6 L12.8 12.2 M12.8 1.6 L1.2 12.2" stroke="#cdcdcd" stroke-width="1"/></svg>
<svg class="a" style="left:60.8px;top:211px;" width="3.4" height="3.4" viewBox="0 0 3.4 3.4"><path d="M3.2 0 V3.2 H0 Z" fill="#d8d8d8"/></svg>
<svg class="a" style="left:69px;top:199.6px;" width="14" height="14" viewBox="0 0 14 14"><rect x="1.2" y="1.8" width="11.8" height="10" fill="#5f5f5f" stroke="#cdcdcd" stroke-width="1.3"/></svg>
<svg class="a" style="left:82.2px;top:211px;" width="3.4" height="3.4" viewBox="0 0 3.4 3.4"><path d="M3.2 0 V3.2 H0 Z" fill="#d8d8d8"/></svg>
<svg class="a" style="left:47.5px;top:218.6px;" width="14" height="14" viewBox="0 0 14 14"><path d="M1.6 2.4 L9.4 9.4 M1.6 9.8 L9.6 3" stroke="#cdcdcd" stroke-width="1.3"/><circle cx="10.8" cy="3.4" r="1.9" fill="none" stroke="#cdcdcd" stroke-width="1.1"/><circle cx="10.8" cy="10.6" r="1.9" fill="none" stroke="#cdcdcd" stroke-width="1.1"/></svg>
<svg class="a" style="left:69px;top:218.2px;" width="14" height="14" viewBox="0 0 14 14"><rect x="4.2" y="2.2" width="8.6" height="9.2" fill="none" stroke="#cdcdcd" stroke-width="1.1" stroke-dasharray="1.6 1.2"/><path d="M0.6 0.8 V9.6 L3 7.4 L6.8 7 Z" fill="#cdcdcd"/></svg>
<svg class="a" style="left:82.8px;top:229.8px;" width="3.4" height="3.4" viewBox="0 0 3.4 3.4"><path d="M3.2 0 V3.2 H0 Z" fill="#d8d8d8"/></svg>
<svg class="a" style="left:47.8px;top:236.6px;" width="13.4" height="12" viewBox="0 0 13.4 12"><defs><linearGradient id="tg1" x1="0" x2="1"><stop offset="0" stop-color="#2c2c2c"/><stop offset="1" stop-color="#d0d0d0"/></linearGradient></defs><rect x=".6" y=".6" width="12.2" height="10.8" fill="url(#tg1)" stroke="#cdcdcd" stroke-width="1.1"/></svg>
<svg class="a" style="left:69.3px;top:236.6px;" width="13.4" height="12" viewBox="0 0 13.4 12"><defs><linearGradient id="tg2" x1="0" x2="0" y1="0" y2="1"><stop offset="0.3" stop-color="#cdcdcd" stop-opacity="0"/><stop offset="1" stop-color="#cdcdcd"/></linearGradient></defs><rect x=".6" y=".6" width="12.2" height="10.8" rx="1.4" fill="#c2c2c2" stroke="#cdcdcd" stroke-width="1.1"/><rect x="1.2" y="1.2" width="2" height="2" fill="#2e2e2e"/><rect x="1.2" y="5.2" width="2" height="2" fill="#2e2e2e"/><rect x="3.2" y="3.2" width="2" height="2" fill="#2e2e2e"/><rect x="3.2" y="7.2" width="2" height="2" fill="#2e2e2e"/><rect x="5.2" y="1.2" width="2" height="2" fill="#2e2e2e"/><rect x="5.2" y="5.2" width="2" height="2" fill="#2e2e2e"/><rect x="7.2" y="3.2" width="2" height="2" fill="#2e2e2e"/><rect x="7.2" y="7.2" width="2" height="2" fill="#2e2e2e"/><rect x="9.2" y="1.2" width="2" height="2" fill="#2e2e2e"/><rect x="9.2" y="5.2" width="2" height="2" fill="#2e2e2e"/><rect x="11.2" y="3.2" width="2" height="2" fill="#2e2e2e"/><rect x="11.2" y="7.2" width="2" height="2" fill="#2e2e2e"/><rect x="1.2" y="1.2" width="11" height="9.6" fill="url(#tg2)"/></svg>
<div class="a" style="left:45px;top:252.3px;width:41px;height:1px;background:#4d4d4d;"></div>
<svg class="a" style="left:47.5px;top:254.8px;" width="14" height="14" viewBox="0 0 14 14"><path d="M1.8 1.6 H12.2 V9.4 L9.4 12.4 H1.8 Z" fill="#cdcdcd"/><path d="M3.6 4 H10.4 M3.6 6.2 H10.4 M3.6 8.4 H8" stroke="#535353" stroke-width=".9"/><path d="M9.4 12.4 V9.4 H12.2" fill="#8a8a8a" stroke="#535353" stroke-width=".5"/></svg>
<svg class="a" style="left:69px;top:254.6px;" width="14" height="14" viewBox="0 0 14 14"><path d="M9.6 0.8 C10.8 -0.2 13.2 1.8 12.4 3.4 L10.8 5 L11.4 5.6 L10.4 6.6 L6.8 3 L7.8 2 L8.4 2.6 Z" fill="#cdcdcd"/><path d="M7.6 4.6 L9 6 L3.6 11.6 L1.6 12.6 L0.8 11.8 L2 10 Z" fill="none" stroke="#cdcdcd" stroke-width="1"/></svg>
<svg class="a" style="left:82.2px;top:266px;" width="3.4" height="3.4" viewBox="0 0 3.4 3.4"><path d="M3.2 0 V3.2 H0 Z" fill="#d8d8d8"/></svg>
<svg class="a" style="left:47.5px;top:271.6px;" width="14" height="14" viewBox="0 0 14 14"><path d="M3.6 13 C2.4 11 1.4 9.4 0.6 7.8 C0.2 6.8 1.4 6.2 2.2 7.2 L3.4 8.6 V3 C3.4 1.8 5 1.8 5 3 V1.8 C5 0.6 6.8 0.6 6.8 1.8 V2.6 C6.8 1.4 8.6 1.4 8.6 2.6 V3.8 C8.6 2.8 10.2 2.8 10.2 3.8 V9 C10.2 11 9.6 12 9 13 Z" fill="#cdcdcd"/><path d="M5 3 V6.4 M6.8 2.6 V6.4 M8.6 3.6 V6.4" stroke="#535353" stroke-width=".6"/></svg>
<svg class="a" style="left:69px;top:271.6px;" width="14" height="14" viewBox="0 0 14 14"><circle cx="5.6" cy="5.4" r="3.9" fill="none" stroke="#cdcdcd" stroke-width="1.3"/><path d="M8.4 8.4 L12.6 12.8" stroke="#cdcdcd" stroke-width="1.7"/></svg>
<div class="a" style="left:60.2px;top:304.8px;width:23.2px;height:23px;background:#fff;"></div>
<div class="a" style="left:66.8px;top:311.6px;width:10px;height:9.6px;background:#535353;"></div>
<svg class="a" style="left:60.2px;top:304.8px;" width="23.2" height="23" viewBox="0 0 23.2 23"><path d="M0.8 22.2 L22.4 0.8" stroke="#e8131a" stroke-width="1.5"/></svg>
<div class="a" style="left:46.2px;top:291px;width:25.6px;height:25.2px;border:1px solid #e8ea9a;box-sizing:border-box;background:radial-gradient(circle at 50% 50%,#2fa64f 0%,#5db446 22%,#9cc73b 45%,#cdd52b 70%,#dfe35a 100%);"></div>
<svg class="a" style="left:77px;top:290.5px;" width="9" height="10" viewBox="0 0 9 10"><path d="M1.8 2.4 C5 1.6 7 3.4 6.6 7" fill="none" stroke="#cfcfcf" stroke-width="1.2"/><path d="M0.4 2.6 L3 0.6 V4.4 Z" fill="#cfcfcf"/><path d="M6.7 9.4 L4.6 6.6 H8.6 Z" fill="#cfcfcf"/></svg>
<svg class="a" style="left:46.4px;top:319px;" width="9" height="9" viewBox="0 0 9 9"><rect x="3.2" y="3.2" width="5.2" height="5.2" fill="#111" stroke="#e8e8e8" stroke-width=".9"/><rect x=".6" y=".6" width="5.2" height="5.2" fill="#fff" stroke="#e8e8e8" stroke-width=".6"/><path d="M.6 5.8 L5.8 .6" stroke="#111" stroke-width=".8"/></svg>
<div class="a" style="left:50.2px;top:335px;width:12.6px;height:11px;background:#2f2f2f;border-radius:1.5px;"></div>
<svg class="a" style="left:50.2px;top:335px;" width="12.6" height="11" viewBox="0 0 12.6 11"><rect x="3.4" y="2.6" width="5.8" height="5.8" fill="none" stroke="#d8d8d8" stroke-width="1"/><rect x="5.2" y="4.4" width="2.2" height="2.2" fill="#9a9a9a"/></svg>
<span class="a t r" style="left:69.39px;top:334.10px;font-size:10.5px;line-height:13px;color:#8b8b8b;font-weight:normal;">T</span>
<div class="a" style="left:46.8px;top:353.6px;width:8.4px;height:8.4px;background:#8cc540;"></div>
<div class="a" style="left:59px;top:351.8px;width:11.6px;height:11.6px;background:#2f2f2f;border-radius:1.5px;"></div>
<div class="a" style="left:60.8px;top:353.6px;width:8px;height:8px;background:radial-gradient(circle at 50% 50%,#2fa64f 0%,#9cc73b 45%,#dfe35a 100%);"></div>
<div class="a" style="left:74.8px;top:353.6px;width:8.4px;height:8.4px;background:#fff;"></div>
<svg class="a" style="left:74.8px;top:353.6px;" width="8.4" height="8.4" viewBox="0 0 8.4 8.4"><path d="M0.4 8 L8 0.4" stroke="#e8131a" stroke-width="1.3"/></svg>
<svg class="a" style="left:81.6px;top:360.4px;" width="3.4" height="3.4" viewBox="0 0 3.4 3.4"><path d="M3.2 0 V3.2 H0 Z" fill="#d8d8d8"/></svg>
<svg class="a" style="left:48.8px;top:371.4px;" width="11" height="9" viewBox="0 0 11 9"><rect x="2.4" y="2.8" width="7.8" height="5.2" fill="#bdbdbd"/><path d="M0.6 2.8 V8 M2.4 1 H10.2" stroke="#bdbdbd" stroke-width="1" stroke-dasharray="1 1"/><path d="M3.4 4.6 H9.2" stroke="#535353" stroke-width=".6"/></svg>
<div class="a" style="left:45px;top:389.4px;width:19px;height:15.2px;background:#2f2f2f;border-radius:2px;"></div>
<svg class="a" style="left:49.6px;top:392.2px;" width="10" height="10" viewBox="0 0 10 10"><rect x=".6" y=".6" width="8.8" height="8.8" fill="#6a6a6a" stroke="#dcdcdc" stroke-width="1"/><path d="M2.4 2.4 H4.4 V4.4 H2.4 Z M5.6 5.6 H7.6 V7.6 H5.6 Z" fill="#dcdcdc"/><path d="M5.6 2.4 H7.6 V4.4 H5.6 Z M2.4 5.6 H4.4 V7.6 H2.4 Z" fill="#3a3a3a"/></svg>
<svg class="a" style="left:71px;top:392.4px;" width="10" height="9.4" viewBox="0 0 10 9.4"><rect x=".6" y=".6" width="8.6" height="8" fill="#5a5a5a" stroke="#cdcdcd" stroke-width="1"/><path d="M.6 2 H9.2" stroke="#cdcdcd" stroke-width="1.6"/></svg>
<svg class="a" style="left:82.6px;top:401.2px;" width="3.4" height="3.4" viewBox="0 0 3.4 3.4"><path d="M3.2 0 V3.2 H0 Z" fill="#d8d8d8"/></svg>
<div class="a" style="left:777px;top:199px;width:166.5px;height:120px;background:#535353;border-radius:2px;box-shadow:0 1px 5px rgba(0,0,0,.45);"></div>
<div class="a" style="left:777px;top:199px;width:166.5px;height:10.2px;background:#464646;border-radius:2px 2px 0 0;"></div>
<svg class="a" style="left:780.6px;top:202px;" width="6" height="6" viewBox="0 0 6 6"><path d="M0.6 0.6 L5.4 5.4 M5.4 0.6 L0.6 5.4" stroke="#c4c4c4" stroke-width="1" fill="none"/></svg>
<svg class="a" style="left:932.5px;top:202px;" width="7" height="6" viewBox="0 0 7 6"><path d="M2.8 0.6 L0.8 3 L2.8 5.4 M5.8 0.6 L3.8 3 L5.8 5.4" stroke="#b0b0b0" stroke-width=".9" fill="none"/></svg>
<div class="a" style="left:777px;top:209.2px;width:166.5px;height:18px;background:#424242;"></div>
<div class="a" style="left:777px;top:209.2px;width:54.6px;height:18px;background:#535353;"></div>
<svg class="a" style="left:783px;top:214.6px;" width="5" height="8" viewBox="0 0 5 8"><path d="M0.8 2.8 L2.5 1 L4.2 2.8 M0.8 5.2 L2.5 7 L4.2 5.2" fill="none" stroke="#c9c9c9" stroke-width=".9"/></svg>
<span class="a t" style="left:790.60px;top:213.10px;font-size:9.4px;line-height:11px;color:#fff;transform:scaleX(0.854);transform-origin:0 50%;">Gradient</span>
<svg class="a" style="left:930.8px;top:215.2px;" width="8" height="6.4" viewBox="0 0 8 6.4"><path d="M0 0.8 H7.6 M0 3.2 H7.6 M0 5.6 H7.6" stroke="#9b9b9b" stroke-width="1.3"/></svg>
<div class="a" style="left:782.8px;top:233px;width:18.8px;height:18.8px;background:radial-gradient(circle at 50% 50%,#2fa64f 0%,#5db446 20%,#9cc73b 45%,#cdd52b 72%,#e1e560 100%);"></div>
<span class="a t" style="left:816.86px;top:233.90px;font-size:9px;line-height:11px;color:#fff;transform:scaleX(0.763);transform-origin:100% 50%;">Type:</span>
<div class="a" style="left:844.5px;top:232px;width:94.3px;height:13.2px;background:#464646;border:1px solid #686868;box-sizing:border-box;border-radius:1.5px;"></div>
<div class="a" style="left:926.4px;top:232px;width:1px;height:13.2px;background:#686868;"></div>
<svg class="a" style="left:926.4px;top:232px;" width="12.4" height="13.2" viewBox="0 0 12.4 13.2"><path transform="translate(6.3 6.9)" d="M-2.8 -1.45 L0 1.45 L2.8 -1.45" fill="none" stroke="#e0e0e0" stroke-width="1.1"/></svg>
<span class="a t" style="left:847.20px;top:234.00px;font-size:9px;line-height:11px;color:#fff;transform:scaleX(0.726);transform-origin:0 50%;">Radial</span>
<span class="a t" style="left:799.70px;top:251.50px;font-size:9px;line-height:11px;color:#fff;transform:scaleX(0.746);transform-origin:100% 50%;">Location:</span>
<div class="a" style="left:844.5px;top:250.2px;width:24px;height:13.4px;background:#484848;border:1px solid #686868;box-sizing:border-box;border-radius:1.5px;"></div>
<span class="a t" style="left:847.60px;top:251.30px;font-size:9px;line-height:11px;color:#fff;transform:scaleX(0.835);transform-origin:0 50%;">39,41</span>
<span class="a t" style="left:870.00px;top:251.50px;font-size:9px;line-height:11px;color:#fff;transform:scaleX(0.675);transform-origin:0 50%;">%</span>
<span class="a t" style="left:884.20px;top:251.50px;font-size:9px;line-height:11px;color:#fff;transform:scaleX(0.764);transform-origin:0 50%;">Angle:</span>
<div class="a" style="left:909.5px;top:250.2px;width:25.4px;height:13.4px;background:#575757;border-radius:1.5px;"></div>
<span class="a t" style="left:802.77px;top:271.70px;font-size:9px;line-height:11px;color:#fff;transform:scaleX(0.731);transform-origin:100% 50%;">Reverse</span>
<svg class="a" style="left:846.8px;top:270px;" width="12.4" height="11.6" viewBox="0 0 12.4 11.6"><rect x=".4" y=".8" width="5" height="4" fill="#d4d4d4"/><rect x="6.4" y="6.6" width="5" height="4" fill="#d4d4d4"/><path d="M2 1.4 V4.2 M8 7.2 V10" stroke="#535353" stroke-width=".9"/><path d="M6.6 1.6 H9.2 V3.6 M8.1 2.8 L9.2 4.2 L10.3 2.8" fill="none" stroke="#d4d4d4" stroke-width="1"/><path d="M5.2 9.8 H2.6 V7.8 M1.5 8.6 L2.6 7.2 L3.7 8.6" fill="none" stroke="#d4d4d4" stroke-width="1"/></svg>
<div class="a" style="left:782px;top:293.8px;width:157px;height:6px;background:#595959;"></div>
<svg class="a" style="left:818.9px;top:293.6px;" width="6.4" height="6.4" viewBox="0 0 6.4 6.4"><path d="M3.2 0.5 L5.9 3.2 L3.2 5.9 L0.5 3.2 Z" fill="#535353" stroke="#8c8c8c" stroke-width=".9"/></svg>
<svg class="a" style="left:867.9px;top:293.6px;" width="6.4" height="6.4" viewBox="0 0 6.4 6.4"><path d="M3.2 0.5 L5.9 3.2 L3.2 5.9 L0.5 3.2 Z" fill="#535353" stroke="#8c8c8c" stroke-width=".9"/></svg>
<svg class="a" style="left:913.1px;top:293.6px;" width="6.4" height="6.4" viewBox="0 0 6.4 6.4"><path d="M3.2 0.5 L5.9 3.2 L3.2 5.9 L0.5 3.2 Z" fill="#535353" stroke="#8c8c8c" stroke-width=".9"/></svg>
<div class="a" style="left:784px;top:299.8px;width:153px;height:7px;border:1px solid #2c2c2c;box-sizing:border-box;background:linear-gradient(90deg,#3aa648 0%,#55b146 20%,#8dc33f 39.4%,#b0cc35 57%,#cfd62b 75%,#e3e76c 100%);"></div>
<svg class="a" style="left:781px;top:307.2px;" width="7.2" height="9.6" viewBox="0 0 7.2 9.6"><path d="M3.6 0.2 L6.8 3 H0.4 Z" fill="#6a6a6a" stroke="#d0d0d0" stroke-width=".5"/><rect x=".6" y="3" width="6" height="6" rx="1" fill="#3c3c3c" stroke="#e0e0e0" stroke-width=".9"/><rect x="2" y="4.4" width="3.2" height="3.2" fill="#2fa64f"/></svg>
<svg class="a" style="left:840.8px;top:307.2px;" width="7.2" height="9.6" viewBox="0 0 7.2 9.6"><path d="M3.6 0.2 L6.8 3 H0.4 Z" fill="#ffffff" stroke="#d0d0d0" stroke-width=".5"/><rect x=".6" y="3" width="6" height="6" rx="1" fill="#3c3c3c" stroke="#e0e0e0" stroke-width=".9"/><rect x="2" y="4.4" width="3.2" height="3.2" fill="#8cc540"/></svg>
<svg class="a" style="left:894.2px;top:307.2px;" width="7.2" height="9.6" viewBox="0 0 7.2 9.6"><path d="M3.6 0.2 L6.8 3 H0.4 Z" fill="#6a6a6a" stroke="#d0d0d0" stroke-width=".5"/><rect x=".6" y="3" width="6" height="6" rx="1" fill="#3c3c3c" stroke="#e0e0e0" stroke-width=".9"/><rect x="2" y="4.4" width="3.2" height="3.2" fill="#e6e616"/></svg>
<svg class="a" style="left:931.8px;top:307.2px;" width="7.2" height="9.6" viewBox="0 0 7.2 9.6"><path d="M3.6 0.2 L6.8 3 H0.4 Z" fill="#6a6a6a" stroke="#d0d0d0" stroke-width=".5"/><rect x=".6" y="3" width="6" height="6" rx="1" fill="#3c3c3c" stroke="#e0e0e0" stroke-width=".9"/><rect x="2" y="4.4" width="3.2" height="3.2" fill="#ecea3a"/></svg>
<div class="a" style="left:963px;top:354.3px;width:170px;height:384.2px;background:#535353;box-shadow:-1px 0 2px rgba(0,0,0,.3);"></div>
<div class="a" style="left:963px;top:354.3px;width:170px;height:1px;background:#3d3d3d;"></div>
<div class="a" style="left:963px;top:355px;width:0.8px;height:383.5px;background:#444;"></div>
<div class="a" style="left:963px;top:355.5px;width:170px;height:20.5px;background:#444444;"></div>
<div class="a" style="left:1007px;top:355.5px;width:57.4px;height:20.5px;background:#535353;"></div>
<span class="a t" style="left:972.00px;top:361.80px;font-size:9.2px;line-height:11px;color:#bdbdbd;transform:scaleX(0.877);transform-origin:0 50%;">Colour</span>
<svg class="a" style="left:1011.5px;top:363px;" width="5" height="8.4" viewBox="0 0 5 8.4"><path d="M0.8 3 L2.5 1.2 L4.2 3 M0.8 5.6 L2.5 7.4 L4.2 5.6" fill="none" stroke="#c9c9c9" stroke-width=".9"/></svg>
<span class="a t" style="left:1019.60px;top:361.80px;font-size:9.4px;line-height:11px;color:#fff;transform:scaleX(0.844);transform-origin:0 50%;">Swatches</span>
<svg class="a" style="left:1103.4px;top:363.8px;" width="8" height="7" viewBox="0 0 8 7"><path d="M0.8 0.8 L3.4 3.4 L0.8 6 M4.4 0.8 L7 3.4 L4.4 6" fill="none" stroke="#d0d0d0" stroke-width="1"/></svg>
<div class="a" style="left:1115.3px;top:362px;width:1px;height:10px;background:#6e6e6e;"></div>
<svg class="a" style="left:1120.6px;top:364px;" width="8" height="6.4" viewBox="0 0 8 6.4"><path d="M0 0.8 H7.6 M0 3.2 H7.6 M0 5.6 H7.6" stroke="#9b9b9b" stroke-width="1.3"/></svg>
<div class="a" style="left:975px;top:388.6px;width:13px;height:13px;background:#fff;"></div>
<div class="a" style="left:978.6px;top:392.2px;width:5.8px;height:5.8px;background:#535353;"></div>
<svg class="a" style="left:975px;top:388.6px;" width="13" height="13" viewBox="0 0 13 13"><path d="M0.6 12.4 L12.4 0.6" stroke="#e8131a" stroke-width="1.4"/></svg>
<div class="a" style="left:968px;top:381.6px;width:13.6px;height:13.4px;background:radial-gradient(circle at 50% 50%,#2fa64f 0%,#7dbd40 30%,#c5d22d 62%,#d6dc3c 100%);"></div>
<svg class="a" style="left:983.2px;top:381.2px;" width="5.6" height="5.6" viewBox="0 0 5.6 5.6"><path d="M0.6 1.4 C3.4 0.8 4.6 2.2 4.4 4.6" fill="none" stroke="#a8a8a8" stroke-width=".9"/><path d="M3.2 4 H5.4 L4.3 5.4 Z" fill="#a8a8a8"/></svg>
<div class="a" style="left:995.6px;top:384px;width:12.6px;height:13.2px;background:#2f2f2f;border-radius:1.5px;"></div>
<svg class="a" style="left:995.6px;top:384px;" width="12.6" height="13.2" viewBox="0 0 12.6 13.2"><rect x="3.6" y="3.8" width="5.4" height="5.4" fill="none" stroke="#d8d8d8" stroke-width="1"/><rect x="5.3" y="5.5" width="2" height="2" fill="#9a9a9a"/></svg>
<span class="a t r" style="left:1012.99px;top:384.50px;font-size:10.5px;line-height:13px;color:#858585;font-weight:normal;">T</span>
<span class="a t" style="left:1048.40px;top:385.80px;font-size:9px;line-height:11px;color:#fff;transform:scaleX(0.797);transform-origin:0 50%;">Tint:</span>
<div class="a" style="left:1068px;top:384.4px;width:37px;height:13.6px;background:#5b5b5b;border-radius:1.5px;"></div>
<span class="a t" style="left:1071.00px;top:385.80px;font-size:9px;line-height:11px;color:#b9b9b9;font-weight:normal;transform:scaleX(0.852);transform-origin:0 50%;">100</span>
<svg class="a" style="left:1094.5px;top:387px;" width="6" height="8" viewBox="0 0 6 8"><path d="M1.6 1 L4.4 4 L1.6 7" fill="none" stroke="#9a9a9a" stroke-width="1"/></svg>
<span class="a t" style="left:1105.80px;top:385.80px;font-size:9px;line-height:11px;color:#fff;transform:scaleX(0.700);transform-origin:0 50%;">%</span>
<div class="a" style="left:963px;top:419.3px;width:170px;height:0.8px;background:#4b4b4b;"></div>
<div class="a" style="left:977px;top:407.55px;width:9px;height:9px;background:#fff;border:1px solid #3b3b3b;box-sizing:border-box;"></div>
<svg class="a" style="left:977px;top:407.55px;" width="9" height="9" viewBox="0 0 9 9"><path d="M0.8 8.2 L8.2 0.8" stroke="#e8131a" stroke-width="1.3"/></svg>
<span class="a t" style="left:991.00px;top:406.85px;font-size:9px;line-height:11px;color:#fff;transform:scaleX(0.755);transform-origin:0 50%;">[None]</span>
<svg class="a" style="left:1090.4px;top:407.45px;" width="9.2" height="9.2" viewBox="0 0 9.2 9.2"><path d="M6.6 0.6 L8.6 2.6 L3.2 8 L0.8 8.4 L1.2 6 Z" fill="#cfcfcf"/><path d="M0.8 0.8 L8.4 8.4" stroke="#535353" stroke-width="2"/><path d="M0.8 0.8 L8.4 8.4" stroke="#cfcfcf" stroke-width="1"/></svg>
<svg class="a" style="left:1112.8px;top:407.85px;" width="8.4" height="8.4" viewBox="0 0 8.4 8.4"><rect x=".5" y=".5" width="7.4" height="7.4" rx="1" fill="#fff" stroke="#c4c4c4" stroke-width=".8"/><path d="M1.2 7.2 L7.2 1.2" stroke="#e8131a" stroke-width="1"/></svg>
<div class="a" style="left:963px;top:419.8px;width:170px;height:15.5px;background:#505050;"></div>
<div class="a" style="left:963px;top:434.8px;width:170px;height:0.8px;background:#4b4b4b;"></div>
<div class="a" style="left:977px;top:423.05px;width:9px;height:9px;background:#000;border:1px solid #3b3b3b;box-sizing:border-box;"></div>
<span class="a t" style="left:991.00px;top:422.35px;font-size:9px;line-height:11px;color:#fff;transform:scaleX(0.783);transform-origin:0 50%;">[Registration]</span>
<svg class="a" style="left:1090.4px;top:422.95px;" width="9.2" height="9.2" viewBox="0 0 9.2 9.2"><path d="M6.6 0.6 L8.6 2.6 L3.2 8 L0.8 8.4 L1.2 6 Z" fill="#cfcfcf"/><path d="M0.8 0.8 L8.4 8.4" stroke="#535353" stroke-width="2"/><path d="M0.8 0.8 L8.4 8.4" stroke="#cfcfcf" stroke-width="1"/></svg>
<svg class="a" style="left:1112.8px;top:423.35px;" width="8.4" height="8.4" viewBox="0 0 8.4 8.4"><rect x=".5" y=".5" width="7.4" height="7.4" fill="none" stroke="#bdbdbd" stroke-width=".8"/><circle cx="4.2" cy="4.2" r="1.8" fill="none" stroke="#bdbdbd" stroke-width=".8"/><path d="M4.2 .5 V7.9 M.5 4.2 H7.9" stroke="#bdbdbd" stroke-width=".8"/></svg>
<div class="a" style="left:963px;top:450.3px;width:170px;height:0.8px;background:#4b4b4b;"></div>
<div class="a" style="left:977px;top:438.55px;width:9px;height:9px;background:#fff;border:1px solid #3b3b3b;box-sizing:border-box;"></div>
<span class="a t" style="left:991.00px;top:437.85px;font-size:9px;line-height:11px;color:#fff;transform:scaleX(0.780);transform-origin:0 50%;">[Paper]</span>
<div class="a" style="left:963px;top:450.8px;width:170px;height:15.5px;background:#505050;"></div>
<div class="a" style="left:963px;top:465.8px;width:170px;height:0.8px;background:#4b4b4b;"></div>
<div class="a" style="left:977px;top:454.05px;width:9px;height:9px;background:#000;border:1px solid #3b3b3b;box-sizing:border-box;"></div>
<span class="a t" style="left:991.00px;top:453.35px;font-size:9px;line-height:11px;color:#fff;transform:scaleX(0.726);transform-origin:0 50%;">[Black]</span>
<svg class="a" style="left:1090.4px;top:453.95px;" width="9.2" height="9.2" viewBox="0 0 9.2 9.2"><path d="M6.6 0.6 L8.6 2.6 L3.2 8 L0.8 8.4 L1.2 6 Z" fill="#cfcfcf"/><path d="M0.8 0.8 L8.4 8.4" stroke="#535353" stroke-width="2"/><path d="M0.8 0.8 L8.4 8.4" stroke="#cfcfcf" stroke-width="1"/></svg>
<svg class="a" style="left:1101.6px;top:454.15px;" width="8.8" height="8.8" viewBox="0 0 8.8 8.8"><rect x=".5" y=".5" width="7.8" height="7.8" fill="#9a9a9a" stroke="#c4c4c4" stroke-width=".9"/><path d="M2.4 2.4 H6.4 V6.4 H2.4 Z" fill="#8a8a8a" stroke="#b4b4b4" stroke-width=".5" stroke-dasharray="1 1"/></svg>
<svg class="a" style="left:1112.6px;top:454.15px;" width="8.8" height="8.8" viewBox="0 0 8.8 8.8"><rect x="0" y="0" width="8.8" height="8.8" fill="#fff"/><path d="M0 0 H8.8 L4.4 4.4 Z" fill="#ec1c8e"/><path d="M8.8 0 V8.8 L4.4 4.4 Z" fill="#fff100"/><path d="M0 8.8 H8.8 L4.4 4.4 Z" fill="#111"/><path d="M0 0 V8.8 L4.4 4.4 Z" fill="#00adef"/></svg>
<div class="a" style="left:963px;top:481.3px;width:170px;height:0.8px;background:#4b4b4b;"></div>
<div class="a" style="left:977px;top:469.55px;width:9px;height:9px;background:#00a0e3;border:1px solid #3b3b3b;box-sizing:border-box;"></div>
<span class="a t" style="left:991.00px;top:468.85px;font-size:9px;line-height:11px;color:#fff;transform:scaleX(0.891);transform-origin:0 50%;">C=100 M=0 Y=0 K=0</span>
<svg class="a" style="left:1101.6px;top:469.65px;" width="8.8" height="8.8" viewBox="0 0 8.8 8.8"><rect x=".5" y=".5" width="7.8" height="7.8" fill="#9a9a9a" stroke="#c4c4c4" stroke-width=".9"/><path d="M2.4 2.4 H6.4 V6.4 H2.4 Z" fill="#8a8a8a" stroke="#b4b4b4" stroke-width=".5" stroke-dasharray="1 1"/></svg>
<svg class="a" style="left:1112.6px;top:469.65px;" width="8.8" height="8.8" viewBox="0 0 8.8 8.8"><rect x="0" y="0" width="8.8" height="8.8" fill="#fff"/><path d="M0 0 H8.8 L4.4 4.4 Z" fill="#ec1c8e"/><path d="M8.8 0 V8.8 L4.4 4.4 Z" fill="#fff100"/><path d="M0 8.8 H8.8 L4.4 4.4 Z" fill="#111"/><path d="M0 0 V8.8 L4.4 4.4 Z" fill="#00adef"/></svg>
<div class="a" style="left:963px;top:481.8px;width:170px;height:15.5px;background:#505050;"></div>
<div class="a" style="left:963px;top:496.8px;width:170px;height:0.8px;background:#4b4b4b;"></div>
<div class="a" style="left:977px;top:485.05px;width:9px;height:9px;background:#e4007f;border:1px solid #3b3b3b;box-sizing:border-box;"></div>
<span class="a t" style="left:991.00px;top:484.35px;font-size:9px;line-height:11px;color:#fff;transform:scaleX(0.891);transform-origin:0 50%;">C=0 M=100 Y=0 K=0</span>
<svg class="a" style="left:1101.6px;top:485.15px;" width="8.8" height="8.8" viewBox="0 0 8.8 8.8"><rect x=".5" y=".5" width="7.8" height="7.8" fill="#9a9a9a" stroke="#c4c4c4" stroke-width=".9"/><path d="M2.4 2.4 H6.4 V6.4 H2.4 Z" fill="#8a8a8a" stroke="#b4b4b4" stroke-width=".5" stroke-dasharray="1 1"/></svg>
<svg class="a" style="left:1112.6px;top:485.15px;" width="8.8" height="8.8" viewBox="0 0 8.8 8.8"><rect x="0" y="0" width="8.8" height="8.8" fill="#fff"/><path d="M0 0 H8.8 L4.4 4.4 Z" fill="#ec1c8e"/><path d="M8.8 0 V8.8 L4.4 4.4 Z" fill="#fff100"/><path d="M0 8.8 H8.8 L4.4 4.4 Z" fill="#111"/><path d="M0 0 V8.8 L4.4 4.4 Z" fill="#00adef"/></svg>
<div class="a" style="left:963px;top:512.3px;width:170px;height:0.8px;background:#4b4b4b;"></div>
<div class="a" style="left:977px;top:500.55px;width:9px;height:9px;background:#fff100;border:1px solid #3b3b3b;box-sizing:border-box;"></div>
<span class="a t" style="left:991.00px;top:499.85px;font-size:9px;line-height:11px;color:#fff;transform:scaleX(0.891);transform-origin:0 50%;">C=0 M=0 Y=100 K=0</span>
<svg class="a" style="left:1101.6px;top:500.65px;" width="8.8" height="8.8" viewBox="0 0 8.8 8.8"><rect x=".5" y=".5" width="7.8" height="7.8" fill="#9a9a9a" stroke="#c4c4c4" stroke-width=".9"/><path d="M2.4 2.4 H6.4 V6.4 H2.4 Z" fill="#8a8a8a" stroke="#b4b4b4" stroke-width=".5" stroke-dasharray="1 1"/></svg>
<svg class="a" style="left:1112.6px;top:500.65px;" width="8.8" height="8.8" viewBox="0 0 8.8 8.8"><rect x="0" y="0" width="8.8" height="8.8" fill="#fff"/><path d="M0 0 H8.8 L4.4 4.4 Z" fill="#ec1c8e"/><path d="M8.8 0 V8.8 L4.4 4.4 Z" fill="#fff100"/><path d="M0 8.8 H8.8 L4.4 4.4 Z" fill="#111"/><path d="M0 0 V8.8 L4.4 4.4 Z" fill="#00adef"/></svg>
<div class="a" style="left:963px;top:512.8px;width:170px;height:15.5px;background:#505050;"></div>
<div class="a" style="left:963px;top:527.8px;width:170px;height:0.8px;background:#4b4b4b;"></div>
<div class="a" style="left:977px;top:516.05px;width:9px;height:9px;background:#d0202a;border:1px solid #3b3b3b;box-sizing:border-box;"></div>
<span class="a t" style="left:991.00px;top:515.35px;font-size:9px;line-height:11px;color:#fff;transform:scaleX(0.891);transform-origin:0 50%;">C=15 M=100 Y=100 K=0</span>
<svg class="a" style="left:1101.6px;top:516.15px;" width="8.8" height="8.8" viewBox="0 0 8.8 8.8"><rect x=".5" y=".5" width="7.8" height="7.8" fill="#9a9a9a" stroke="#c4c4c4" stroke-width=".9"/><path d="M2.4 2.4 H6.4 V6.4 H2.4 Z" fill="#8a8a8a" stroke="#b4b4b4" stroke-width=".5" stroke-dasharray="1 1"/></svg>
<svg class="a" style="left:1112.6px;top:516.15px;" width="8.8" height="8.8" viewBox="0 0 8.8 8.8"><rect x="0" y="0" width="8.8" height="8.8" fill="#fff"/><path d="M0 0 H8.8 L4.4 4.4 Z" fill="#ec1c8e"/><path d="M8.8 0 V8.8 L4.4 4.4 Z" fill="#fff100"/><path d="M0 8.8 H8.8 L4.4 4.4 Z" fill="#111"/><path d="M0 0 V8.8 L4.4 4.4 Z" fill="#00adef"/></svg>
<div class="a" style="left:963px;top:543.3px;width:170px;height:0.8px;background:#4b4b4b;"></div>
<div class="a" style="left:977px;top:531.55px;width:9px;height:9px;background:#27408f;border:1px solid #3b3b3b;box-sizing:border-box;"></div>
<span class="a t" style="left:991.00px;top:530.85px;font-size:9px;line-height:11px;color:#fff;transform:scaleX(0.891);transform-origin:0 50%;">C=100 M=90 Y=10 K=0</span>
<svg class="a" style="left:1101.6px;top:531.65px;" width="8.8" height="8.8" viewBox="0 0 8.8 8.8"><rect x=".5" y=".5" width="7.8" height="7.8" fill="#9a9a9a" stroke="#c4c4c4" stroke-width=".9"/><path d="M2.4 2.4 H6.4 V6.4 H2.4 Z" fill="#8a8a8a" stroke="#b4b4b4" stroke-width=".5" stroke-dasharray="1 1"/></svg>
<svg class="a" style="left:1112.6px;top:531.65px;" width="8.8" height="8.8" viewBox="0 0 8.8 8.8"><rect x="0" y="0" width="8.8" height="8.8" fill="#fff"/><path d="M0 0 H8.8 L4.4 4.4 Z" fill="#ec1c8e"/><path d="M8.8 0 V8.8 L4.4 4.4 Z" fill="#fff100"/><path d="M0 8.8 H8.8 L4.4 4.4 Z" fill="#111"/><path d="M0 0 V8.8 L4.4 4.4 Z" fill="#00adef"/></svg>
<div class="a" style="left:963px;top:543.8px;width:170px;height:15.5px;background:#505050;"></div>
<div class="a" style="left:963px;top:558.8px;width:170px;height:0.8px;background:#4b4b4b;"></div>
<div class="a" style="left:977px;top:547.05px;width:9px;height:9px;background:#3daa4a;border:1px solid #3b3b3b;box-sizing:border-box;"></div>
<span class="a t" style="left:991.00px;top:546.35px;font-size:9px;line-height:11px;color:#fff;transform:scaleX(0.894);transform-origin:0 50%;">C=75 M=5 Y=100 K=0</span>
<svg class="a" style="left:1101.6px;top:547.15px;" width="8.8" height="8.8" viewBox="0 0 8.8 8.8"><rect x=".5" y=".5" width="7.8" height="7.8" fill="#9a9a9a" stroke="#c4c4c4" stroke-width=".9"/><path d="M2.4 2.4 H6.4 V6.4 H2.4 Z" fill="#8a8a8a" stroke="#b4b4b4" stroke-width=".5" stroke-dasharray="1 1"/></svg>
<svg class="a" style="left:1112.6px;top:547.15px;" width="8.8" height="8.8" viewBox="0 0 8.8 8.8"><rect x="0" y="0" width="8.8" height="8.8" fill="#fff"/><path d="M0 0 H8.8 L4.4 4.4 Z" fill="#ec1c8e"/><path d="M8.8 0 V8.8 L4.4 4.4 Z" fill="#fff100"/><path d="M0 8.8 H8.8 L4.4 4.4 Z" fill="#111"/><path d="M0 0 V8.8 L4.4 4.4 Z" fill="#00adef"/></svg>
<div class="a" style="left:963px;top:559.3px;width:170px;height:15.5px;background:#4f6d92;"></div>
<div class="a" style="left:977px;top:562.55px;width:9px;height:9px;background:#8cc540;border:1px solid #3b3b3b;box-sizing:border-box;"></div>
<span class="a t" style="left:991.00px;top:561.85px;font-size:9px;line-height:11px;color:#fff;transform:scaleX(0.925);transform-origin:0 50%;">C=50 M=5 Y=100 K=0</span>
<svg class="a" style="left:1101.6px;top:562.65px;" width="8.8" height="8.8" viewBox="0 0 8.8 8.8"><rect x=".5" y=".5" width="7.8" height="7.8" fill="#9a9a9a" stroke="#c4c4c4" stroke-width=".9"/><path d="M2.4 2.4 H6.4 V6.4 H2.4 Z" fill="#8a8a8a" stroke="#b4b4b4" stroke-width=".5" stroke-dasharray="1 1"/></svg>
<svg class="a" style="left:1112.6px;top:562.65px;" width="8.8" height="8.8" viewBox="0 0 8.8 8.8"><rect x="0" y="0" width="8.8" height="8.8" fill="#fff"/><path d="M0 0 H8.8 L4.4 4.4 Z" fill="#ec1c8e"/><path d="M8.8 0 V8.8 L4.4 4.4 Z" fill="#fff100"/><path d="M0 8.8 H8.8 L4.4 4.4 Z" fill="#111"/><path d="M0 0 V8.8 L4.4 4.4 Z" fill="#00adef"/></svg>
<div class="a" style="left:963px;top:574.8px;width:170px;height:15.5px;background:#505050;"></div>
<div class="a" style="left:963px;top:589.8px;width:170px;height:0.8px;background:#4b4b4b;"></div>
<div class="a" style="left:977px;top:578.05px;width:9px;height:9px;background:#cfd72c;border:1px solid #3b3b3b;box-sizing:border-box;"></div>
<span class="a t" style="left:991.00px;top:577.35px;font-size:9px;line-height:11px;color:#fff;transform:scaleX(0.894);transform-origin:0 50%;">C=25 M=5 Y=100 K=0</span>
<svg class="a" style="left:1101.6px;top:578.15px;" width="8.8" height="8.8" viewBox="0 0 8.8 8.8"><rect x=".5" y=".5" width="7.8" height="7.8" fill="#9a9a9a" stroke="#c4c4c4" stroke-width=".9"/><path d="M2.4 2.4 H6.4 V6.4 H2.4 Z" fill="#8a8a8a" stroke="#b4b4b4" stroke-width=".5" stroke-dasharray="1 1"/></svg>
<svg class="a" style="left:1112.6px;top:578.15px;" width="8.8" height="8.8" viewBox="0 0 8.8 8.8"><rect x="0" y="0" width="8.8" height="8.8" fill="#fff"/><path d="M0 0 H8.8 L4.4 4.4 Z" fill="#ec1c8e"/><path d="M8.8 0 V8.8 L4.4 4.4 Z" fill="#fff100"/><path d="M0 8.8 H8.8 L4.4 4.4 Z" fill="#111"/><path d="M0 0 V8.8 L4.4 4.4 Z" fill="#00adef"/></svg>
<div class="a" style="left:963px;top:605.3px;width:170px;height:0.8px;background:#4b4b4b;"></div>
<div class="a" style="left:977px;top:593.55px;width:9px;height:9px;background:#e3e66a;border:1px solid #3b3b3b;box-sizing:border-box;"></div>
<span class="a t" style="left:991.00px;top:592.85px;font-size:9px;line-height:11px;color:#fff;transform:scaleX(0.891);transform-origin:0 50%;">C=15 M=0 Y=75 K=0</span>
<svg class="a" style="left:1101.6px;top:593.65px;" width="8.8" height="8.8" viewBox="0 0 8.8 8.8"><rect x=".5" y=".5" width="7.8" height="7.8" fill="#9a9a9a" stroke="#c4c4c4" stroke-width=".9"/><path d="M2.4 2.4 H6.4 V6.4 H2.4 Z" fill="#8a8a8a" stroke="#b4b4b4" stroke-width=".5" stroke-dasharray="1 1"/></svg>
<svg class="a" style="left:1112.6px;top:593.65px;" width="8.8" height="8.8" viewBox="0 0 8.8 8.8"><rect x="0" y="0" width="8.8" height="8.8" fill="#fff"/><path d="M0 0 H8.8 L4.4 4.4 Z" fill="#ec1c8e"/><path d="M8.8 0 V8.8 L4.4 4.4 Z" fill="#fff100"/><path d="M0 8.8 H8.8 L4.4 4.4 Z" fill="#111"/><path d="M0 0 V8.8 L4.4 4.4 Z" fill="#00adef"/></svg>
<div class="a" style="left:963px;top:714.6px;width:170px;height:0.8px;background:#474747;"></div>
<svg class="a" style="left:967.6px;top:719px;" width="10" height="9" viewBox="0 0 10 9"><path d="M0.6 0.8 H4.4 V3.4 H0.6 Z" fill="#c9c9c9"/><path d="M5.6 5.2 H9.4 V8.2 H5.6 Z" fill="#c9c9c9"/><path d="M6 1.4 H8 V3.6 M7 2.8 L8 4 L9 2.8" fill="none" stroke="#c9c9c9" stroke-width=".9"/><path d="M4 7.4 H2 V5.2 M1 6 L2 4.8 L3 6" fill="none" stroke="#c9c9c9" stroke-width=".9"/></svg>
<svg class="a" style="left:1047.1px;top:719px;" width="11" height="9" viewBox="0 0 11 9"><rect x=".6" y=".6" width="7.8" height="7.4" fill="#c4c4c4"/><path d="M.6 3 H8.4 M.6 5.4 H8.4 M3.2 .6 V8 M5.8 .6 V8" stroke="#535353" stroke-width=".7"/><path d="M9.2 7.4 H10.6 L9.9 8.4 Z" fill="#c4c4c4"/></svg>
<svg class="a" style="left:1067.6px;top:719px;" width="10" height="9" viewBox="0 0 10 9"><path d="M0.4 1 H3.8 L4.8 2.2 H9.6 V8 H0.4 Z" fill="#cfcfcf"/></svg>
<svg class="a" style="left:1088px;top:718.9px;" width="9.2" height="9.2" viewBox="0 0 9.2 9.2"><rect x=".8" y=".8" width="7.6" height="7.6" rx=".8" fill="none" stroke="#cfcfcf" stroke-width="1"/><path d="M4.6 2.8 V6.4 M2.8 4.6 H6.4" stroke="#cfcfcf" stroke-width="1"/></svg>
<svg class="a" style="left:1106.7px;top:718.8px;" width="9" height="9.4" viewBox="0 0 9 9.4"><path d="M1.4 2.4 H7.6 V8.6 H1.4 Z" fill="none" stroke="#cfcfcf" stroke-width="1"/><path d="M0.4 2.2 H8.6 M3.2 1 H5.8" stroke="#cfcfcf" stroke-width="1"/><path d="M3.4 4 V7 M5.6 4 V7" stroke="#cfcfcf" stroke-width=".8"/></svg>
<div class="a" style="left:963px;top:732.6px;width:170px;height:1.2px;background:#3a3a3a;"></div>
<div class="a" style="left:963px;top:733.8px;width:170px;height:4.8px;background:#4e4e4e;"></div>
<svg class="a" style="left:1042.5px;top:734.6px;" width="10" height="3" viewBox="0 0 10 3"><path d="M0 1.4 H10" stroke="#777" stroke-width="2" stroke-dasharray="1 1"/></svg>
<div class="a" style="left:963px;top:738.4px;width:170px;height:0.8px;background:#3f3f3f;"></div>
<div class="a" style="left:1134px;top:101.5px;width:26.3px;height:1px;background:#3f3f3f;"></div>
<svg class="a" style="left:1141.7px;top:104.4px;" width="11" height="3" viewBox="0 0 11 3"><path d="M0 1.2 H11" stroke="#464646" stroke-width="2.2" stroke-dasharray="1 1"/></svg>
<div class="a" style="left:1134px;top:129.5px;width:26.3px;height:1px;background:#3f3f3f;"></div>
<svg class="a" style="left:1141.7px;top:132.4px;" width="11" height="3" viewBox="0 0 11 3"><path d="M0 1.2 H11" stroke="#464646" stroke-width="2.2" stroke-dasharray="1 1"/></svg>
<div class="a" style="left:1134px;top:197.5px;width:26.3px;height:1px;background:#3f3f3f;"></div>
<svg class="a" style="left:1141.7px;top:200.4px;" width="11" height="3" viewBox="0 0 11 3"><path d="M0 1.2 H11" stroke="#464646" stroke-width="2.2" stroke-dasharray="1 1"/></svg>
<div class="a" style="left:1134px;top:265.5px;width:26.3px;height:1px;background:#3f3f3f;"></div>
<svg class="a" style="left:1141.7px;top:268.4px;" width="11" height="3" viewBox="0 0 11 3"><path d="M0 1.2 H11" stroke="#464646" stroke-width="2.2" stroke-dasharray="1 1"/></svg>
<div class="a" style="left:1134px;top:315.5px;width:26.3px;height:1px;background:#3f3f3f;"></div>
<svg class="a" style="left:1141.7px;top:318.4px;" width="11" height="3" viewBox="0 0 11 3"><path d="M0 1.2 H11" stroke="#464646" stroke-width="2.2" stroke-dasharray="1 1"/></svg>
<div class="a" style="left:1134px;top:384.1px;width:26.3px;height:1px;background:#3f3f3f;"></div>
<svg class="a" style="left:1141.7px;top:387px;" width="11" height="3" viewBox="0 0 11 3"><path d="M0 1.2 H11" stroke="#464646" stroke-width="2.2" stroke-dasharray="1 1"/></svg>
<div class="a" style="left:1134px;top:433px;width:26.3px;height:1px;background:#3f3f3f;"></div>
<svg class="a" style="left:1141.7px;top:435.9px;" width="11" height="3" viewBox="0 0 11 3"><path d="M0 1.2 H11" stroke="#464646" stroke-width="2.2" stroke-dasharray="1 1"/></svg>
<div class="a" style="left:1134px;top:559.5px;width:26.3px;height:1px;background:#3f3f3f;"></div>
<svg class="a" style="left:1141.7px;top:562.4px;" width="11" height="3" viewBox="0 0 11 3"><path d="M0 1.2 H11" stroke="#464646" stroke-width="2.2" stroke-dasharray="1 1"/></svg>
<div class="a" style="left:1134px;top:609.5px;width:26.3px;height:1px;background:#3f3f3f;"></div>
<svg class="a" style="left:1141.7px;top:612.4px;" width="11" height="3" viewBox="0 0 11 3"><path d="M0 1.2 H11" stroke="#464646" stroke-width="2.2" stroke-dasharray="1 1"/></svg>
<div class="a" style="left:1134px;top:638.5px;width:26.3px;height:1px;background:#3f3f3f;"></div>
<svg class="a" style="left:1141.7px;top:641.4px;" width="11" height="3" viewBox="0 0 11 3"><path d="M0 1.2 H11" stroke="#464646" stroke-width="2.2" stroke-dasharray="1 1"/></svg>
<div class="a" style="left:1134px;top:667px;width:26.3px;height:1px;background:#3f3f3f;"></div>
<svg class="a" style="left:1141.7px;top:669.9px;" width="11" height="3" viewBox="0 0 11 3"><path d="M0 1.2 H11" stroke="#464646" stroke-width="2.2" stroke-dasharray="1 1"/></svg>
<div class="a" style="left:1134px;top:695.5px;width:26.3px;height:1px;background:#3f3f3f;"></div>
<svg class="a" style="left:1140.2px;top:110px;" width="14" height="14" viewBox="0 0 14 14"><path d="M1 2 H5 L6.2 3.4 H13 V12.4 H1 Z" fill="none" stroke="#d6d6d6" stroke-width="1.1"/><path d="M3.4 10.6 V7 L5 5.8 L6.6 7 V10.6 Z M7.4 10.6 V7 L9 5.8 L10.6 7 V10.6 Z" fill="#d6d6d6"/></svg>
<svg class="a" style="left:1140.2px;top:140px;" width="14" height="14" viewBox="0 0 14 14"><rect x="2.6" y="0.8" width="3" height="3" fill="none" stroke="#d6d6d6" stroke-width=".9"/><rect x="2.6" y="5.2" width="3" height="3" fill="none" stroke="#d6d6d6" stroke-width=".9"/><rect x="2.4" y="9.6" width="3.4" height="3.4" fill="#d6d6d6"/><path d="M8.4 10.6 C12.4 9.6 12.6 4.4 8.6 3.6" fill="none" stroke="#d6d6d6" stroke-width="1.2"/><path d="M10.4 1.4 L7.6 3.6 L10.4 5.8 Z" fill="#d6d6d6"/></svg>
<svg class="a" style="left:1140.2px;top:159.8px;" width="14" height="14" viewBox="0 0 14 14"><circle cx="7" cy="7" r="5.6" fill="#d6d6d6"/><path d="M5.6 6 H7.6 V10 M5.4 10.2 H9" stroke="#535353" stroke-width="1.3" fill="none"/><circle cx="7" cy="3.8" r="1" fill="#535353"/></svg>
<svg class="a" style="left:1140.2px;top:179px;" width="14" height="14" viewBox="0 0 14 14"><path d="M1.4 2 H12.6 V9.4 H6.4 L3.6 12.2 V9.4 H1.4 Z" fill="#d6d6d6"/></svg>
<svg class="a" style="left:1140.2px;top:208.5px;" width="14" height="14" viewBox="0 0 14 14"><path d="M1.4 4.6 L3.4 2.6 H6.4 V11.4 H1.4 Z M12.6 4.6 L10.6 2.6 H7.6 V11.4 H12.6 Z" fill="#d6d6d6"/><path d="M7 0.8 V13" stroke="#d6d6d6" stroke-width=".9"/><path d="M1.4 5 H3.6 V2.6 M12.6 5 H10.4 V2.6" stroke="#535353" stroke-width=".6" fill="none"/></svg>
<svg class="a" style="left:1140.2px;top:228.6px;" width="14" height="14" viewBox="0 0 14 14"><path d="M7 1.4 L12.6 4.8 L7 8.2 L1.4 4.8 Z" fill="#d6d6d6"/><path d="M2.2 8 L7 11 L11.8 8" fill="none" stroke="#d6d6d6" stroke-width="1.3"/></svg>
<svg class="a" style="left:1140.2px;top:248px;" width="14" height="14" viewBox="0 0 14 14"><rect x="0.8" y="4.4" width="7.4" height="5.2" rx="2.6" fill="none" stroke="#d6d6d6" stroke-width="1.3"/><rect x="5.8" y="4.4" width="7.4" height="5.2" rx="2.6" fill="none" stroke="#d6d6d6" stroke-width="1.3"/></svg>
<svg class="a" style="left:1140.2px;top:275.6px;" width="14" height="14" viewBox="0 0 14 14"><path d="M1 2.6 H13 M1 7 H13 M1 11.4 H13" stroke="#d6d6d6" stroke-width="1"/><circle cx="5" cy="2.6" r="1.5" fill="#535353" stroke="#d6d6d6" stroke-width="1"/><circle cx="9" cy="7" r="1.5" fill="#535353" stroke="#d6d6d6" stroke-width="1"/><circle cx="5" cy="11.4" r="1.5" fill="#535353" stroke="#d6d6d6" stroke-width="1"/></svg>
<svg class="a" style="left:1140.2px;top:296px;" width="14" height="14" viewBox="0 0 14 14"><rect x="2.4" y="2.4" width="9.2" height="9.2" fill="none" stroke="#d6d6d6" stroke-width="1" stroke-dasharray="1.4 1"/><g fill="#d6d6d6"><rect x="1" y="1" width="2.8" height="2.8"/><rect x="10.2" y="1" width="2.8" height="2.8"/><rect x="1" y="10.2" width="2.8" height="2.8"/><rect x="10.2" y="10.2" width="2.8" height="2.8"/><rect x="5.8" y="1.2" width="2.4" height="2.4"/><rect x="5.8" y="10.4" width="2.4" height="2.4"/><rect x="1.2" y="5.8" width="2.4" height="2.4"/><rect x="10.4" y="5.8" width="2.4" height="2.4"/></g></svg>
<svg class="a" style="left:1140.2px;top:325px;" width="14" height="14" viewBox="0 0 14 14"><path d="M1 2.6 H13" stroke="#d6d6d6" stroke-width="1"/><path d="M1 7 H13" stroke="#d6d6d6" stroke-width="1.6"/><path d="M1 11.4 H13" stroke="#d6d6d6" stroke-width="2.2"/></svg>
<svg class="a" style="left:1140.2px;top:345.4px;" width="14" height="14" viewBox="0 0 14 14"><path d="M1.6 1.6 H12.4 V12.4 H1.6 Z" fill="#d6d6d6"/><circle cx="8" cy="6" r="3" fill="#535353"/><path d="M1.6 1.6 H5 V4.6 H1.6 Z" fill="#535353" stroke="#d6d6d6" stroke-width="1"/></svg>
<svg class="a" style="left:1140.2px;top:365px;" width="14" height="14" viewBox="0 0 14 14"><rect x="4.4" y="1.4" width="8" height="8" rx="1.4" fill="none" stroke="#d6d6d6" stroke-width="1.1" stroke-dasharray="2 1.2"/><circle cx="4.2" cy="9" r="2.6" fill="#535353" stroke="#d6d6d6" stroke-width="1"/><circle cx="7.4" cy="10.4" r="2.6" fill="#535353" stroke="#d6d6d6" stroke-width="1"/></svg>
<svg class="a" style="left:1140.2px;top:393px;" width="14" height="14" viewBox="0 0 14 14"><path d="M7 1.6 C11 1.6 13.2 4 13.2 6.4 C13.2 8.6 11.2 9.2 9.8 8.8 C8.4 8.4 7.6 9.6 8.4 10.6 C9 11.6 8 12.4 6.6 12.2 C3.2 12 0.8 9.8 0.8 6.8 C0.8 3.8 3.4 1.6 7 1.6 Z" fill="#d6d6d6"/><circle cx="4" cy="5.6" r="1.1" fill="#535353"/><circle cx="7" cy="4" r="1.1" fill="#535353"/><circle cx="10.2" cy="5.4" r="1.1" fill="#535353"/><circle cx="4.2" cy="8.8" r="1.1" fill="#535353"/></svg>
<div class="a" style="left:1138.6px;top:411.4px;width:17.4px;height:17.4px;background:#2f2f2f;border-radius:2px;"></div>
<svg class="a" style="left:1140.2px;top:413px;" width="14" height="14" viewBox="0 0 14 14"><rect x="1.2" y="2.4" width="11.6" height="9.2" fill="#d6d6d6"/><path d="M1.2 7 H12.8 M5 2.4 V11.6 M9 2.4 V11.6" stroke="#2f2f2f" stroke-width=".9"/><path d="M1.2 4 H12.8" stroke="#2f2f2f" stroke-width=".5"/></svg>
<span class="a t" style="left:1141.66px;top:441.20px;font-size:13px;line-height:16px;color:#d6d6d6;font-weight:normal;">A</span>
<div class="a" style="left:1152px;top:442.4px;width:1px;height:13.2px;background:#d6d6d6;"></div>
<span class="a t" style="left:1143.78px;top:461.00px;font-size:13px;line-height:16px;color:#d6d6d6;">¶</span>
<svg class="a" style="left:1140.2px;top:482px;" width="14" height="14" viewBox="0 0 14 14"><path d="M1 1.6 H13 M1 3.8 H13 M1 10.2 H13 M1 12.4 H13 M1 6 H3.4 M10.6 6 H13 M1 8 H3.4 M10.6 8 H13" stroke="#d6d6d6" stroke-width=".9"/><circle cx="7" cy="7" r="2.8" fill="#d6d6d6"/></svg>
<svg class="a" style="left:1139.6px;top:500px;" width="16" height="15" viewBox="0 0 16 15"><rect x="1.6" y="6.2" width="4.4" height="4.4" rx="1" fill="none" stroke="#d6d6d6" stroke-width="1.1"/><rect x="4" y="9" width="4.4" height="4.4" rx="1" fill="#535353" stroke="#d6d6d6" stroke-width="1.1"/></svg>
<span class="a t" style="left:1147.16px;top:498.60px;font-size:11.5px;line-height:14px;color:#d6d6d6;font-weight:normal;">A</span>
<svg class="a" style="left:1139.6px;top:521px;" width="16" height="15" viewBox="0 0 16 15"><rect x="1.6" y="6.2" width="4.4" height="4.4" rx="1" fill="none" stroke="#d6d6d6" stroke-width="1.1"/><rect x="4" y="9" width="4.4" height="4.4" rx="1" fill="#535353" stroke="#d6d6d6" stroke-width="1.1"/></svg>
<span class="a t" style="left:1147.94px;top:520.10px;font-size:11px;line-height:13px;color:#d6d6d6;">¶</span>
<svg class="a" style="left:1140.2px;top:541.5px;" width="14" height="14" viewBox="0 0 14 14"><path d="M1 2 H5 L6.2 3.4 H13 V12.4 H1 Z" fill="#d6d6d6"/><path d="M8 4.6 L5.4 8.4 H7.2 L6.4 11.4 L9.4 7.4 H7.4 Z" fill="#535353"/></svg>
<svg class="a" style="left:1140.2px;top:569.5px;" width="14" height="14" viewBox="0 0 14 14"><rect x="1.6" y="1.6" width="6.4" height="6.4" fill="#d6d6d6"/><rect x="5.8" y="5.8" width="6.6" height="6.6" fill="#d6d6d6" stroke="#535353" stroke-width="1"/></svg>
<svg class="a" style="left:1140.2px;top:589.5px;" width="14" height="14" viewBox="0 0 14 14"><path d="M1.6 0.8 V13.2" stroke="#d6d6d6" stroke-width="1.2"/><rect x="3.4" y="2.6" width="5.6" height="3.4" fill="#d6d6d6"/><rect x="3.4" y="8" width="9.4" height="3.4" fill="#d6d6d6"/></svg>
<svg class="a" style="left:1140.2px;top:619px;" width="14" height="14" viewBox="0 0 14 14"><path d="M0.8 4.4 H3.6 M2.4 2.8 L4 4.4 L2.4 6" fill="none" stroke="#d6d6d6" stroke-width="1.1"/><path d="M5 1.6 C7.4 1 9 2.6 8.6 4.6 L6.8 6.6 L5.2 5 Z" fill="#d6d6d6"/><circle cx="10" cy="10" r="2.2" fill="none" stroke="#d6d6d6" stroke-width="1.6"/><g stroke="#d6d6d6" stroke-width="1.3"><path d="M10 6.4 V7.6 M10 12.4 V13.6 M6.4 10 H7.6 M12.4 10 H13.6 M7.5 7.5 L8.3 8.3 M11.7 11.7 L12.5 12.5 M12.5 7.5 L11.7 8.3 M7.5 12.5 L8.3 11.7"/></g><path d="M4.2 7.6 L6.4 9.8" stroke="#d6d6d6" stroke-width="1.6"/></svg>
<svg class="a" style="left:1140.2px;top:647px;" width="14" height="14" viewBox="0 0 14 14"><path d="M8 1.6 H2.8 C2 1.6 1.6 2 1.6 2.8 V11.2 C1.6 12 2 12.4 2.8 12.4 H11.2 C12 12.4 12.4 12 12.4 11.2 V6.4" fill="none" stroke="#d6d6d6" stroke-width="1.2"/><path d="M10.8 0.4 L11.5 2.5 L13.6 3.2 L11.5 3.9 L10.8 6 L10.1 3.9 L8 3.2 L10.1 2.5 Z" fill="#d6d6d6"/><path d="M4.4 9.8 L6.6 6.2 L8.4 9.8 Z" fill="#d6d6d6"/></svg>
<svg class="a" style="left:1140.2px;top:676.5px;" width="14" height="14" viewBox="0 0 14 14"><circle cx="7" cy="2.2" r="1.3" fill="#c0c0c0"/><circle cx="10.6" cy="4.2" r="1.2" fill="#a8a8a8"/><circle cx="11.2" cy="8.2" r="1.1" fill="#8c8c8c"/><circle cx="8.4" cy="11.2" r="1.2" fill="#9a9a9a"/><circle cx="4.4" cy="10.4" r="1.3" fill="#b4b4b4"/><circle cx="2.6" cy="6.6" r="1.1" fill="#8a8a8a"/><circle cx="7" cy="6.8" r="1.2" fill="#a4a4a4"/></svg>
<div class="a" style="left:92px;top:756.8px;width:1041px;height:11.7px;background:#5c5c5c;"></div>
<div class="a" style="left:92px;top:756.8px;width:364px;height:11.7px;background:#535353;"></div>
<div class="a" style="left:92px;top:756.4px;width:1041px;height:0.8px;background:#4a4a4a;"></div>
<span class="a t" style="left:101.60px;top:757.35px;font-size:9px;line-height:11px;color:#fff;transform:scaleX(0.799);transform-origin:0 50%;">100%</span>
<svg class="a" style="left:130px;top:756.8px;" width="9" height="11.7" viewBox="0 0 9 11.7"><path transform="translate(4.5 6.1499999999999995)" d="M-2.8 -1.4 L0 1.4 L2.8 -1.4" fill="none" stroke="#e0e0e0" stroke-width="1.1"/></svg>
<svg class="a" style="left:144.5px;top:759.4px;" width="8" height="7" viewBox="0 0 8 7"><path d="M1.2 0.6 V6.4" stroke="#8a8a8a" stroke-width="1.1"/><path d="M6.4 0.6 L2.6 3.5 L6.4 6.4 Z" fill="#8a8a8a"/></svg>
<svg class="a" style="left:160.6px;top:759.4px;" width="6" height="7" viewBox="0 0 6 7"><path d="M5 0.6 L1.2 3.5 L5 6.4 Z" fill="#8a8a8a"/></svg>
<div class="a" style="left:174.4px;top:757.2px;width:50px;height:10.9px;background:#3d3d3d;border:1px solid #686868;box-sizing:border-box;"></div>
<span class="a t" style="left:177.40px;top:757.35px;font-size:9px;line-height:11px;color:#fff;">1</span>
<div class="a" style="left:224.4px;top:757.2px;width:13.4px;height:10.9px;background:#474747;border:1px solid #686868;box-sizing:border-box;"></div>
<svg class="a" style="left:224.4px;top:756.8px;" width="13.4" height="11.7" viewBox="0 0 13.4 11.7"><path transform="translate(6.7 6.1499999999999995)" d="M-2.8 -1.4 L0 1.4 L2.8 -1.4" fill="none" stroke="#e0e0e0" stroke-width="1.1"/></svg>
<svg class="a" style="left:244.6px;top:759.4px;" width="6" height="7" viewBox="0 0 6 7"><path d="M1 0.6 L4.8 3.5 L1 6.4 Z" fill="#8a8a8a"/></svg>
<svg class="a" style="left:258.8px;top:759.4px;" width="8" height="7" viewBox="0 0 8 7"><path d="M6.8 0.6 V6.4" stroke="#8a8a8a" stroke-width="1.1"/><path d="M1.6 0.6 L5.4 3.5 L1.6 6.4 Z" fill="#8a8a8a"/></svg>
<svg class="a" style="left:277.5px;top:758.4px;" width="12" height="9" viewBox="0 0 12 9"><path d="M1.4 7.8 A3.9 3.9 0 1 1 8.6 7.8" fill="none" stroke="#cfcfcf" stroke-width="1.3"/><path d="M5 4.6 L7.8 1.4" stroke="#cfcfcf" stroke-width="1.1"/><path d="M9.6 7.2 H11.4 L10.5 8.4 Z" fill="#cfcfcf"/></svg>
<span class="a t" style="left:301.00px;top:757.35px;font-size:9px;line-height:11px;color:#fff;transform:scaleX(0.763);transform-origin:0 50%;">[Basic] (working)</span>
<svg class="a" style="left:371px;top:756.8px;" width="9" height="11.7" viewBox="0 0 9 11.7"><path transform="translate(4.5 6.1499999999999995)" d="M-2.8 -1.4 L0 1.4 L2.8 -1.4" fill="none" stroke="#e0e0e0" stroke-width="1.1"/></svg>
<div class="a" style="left:389.2px;top:759.15px;width:7.2px;height:7.2px;background:#22b422;border-radius:4px;"></div>
<span class="a t" style="left:401.00px;top:757.35px;font-size:9px;line-height:11px;color:#fff;transform:scaleX(0.775);transform-origin:0 50%;">No errors</span>
<svg class="a" style="left:444px;top:756.8px;" width="9" height="11.7" viewBox="0 0 9 11.7"><path transform="translate(4.5 6.1499999999999995)" d="M-2.8 -1.4 L0 1.4 L2.8 -1.4" fill="none" stroke="#8e8e8e" stroke-width="1.1"/></svg>
<div class="a" style="left:643.5px;top:758.2px;width:279px;height:9.3px;background:#787878;border-radius:5px;"></div>
<svg class="a" style="left:1109px;top:758.4px;" width="10" height="8.6" viewBox="0 0 10 8.6"><rect x=".6" y=".6" width="8.8" height="7.4" fill="none" stroke="#cfcfcf" stroke-width="1"/><path d="M5 .6 V8" stroke="#cfcfcf" stroke-width="1"/></svg>
</div>
</body></html>
